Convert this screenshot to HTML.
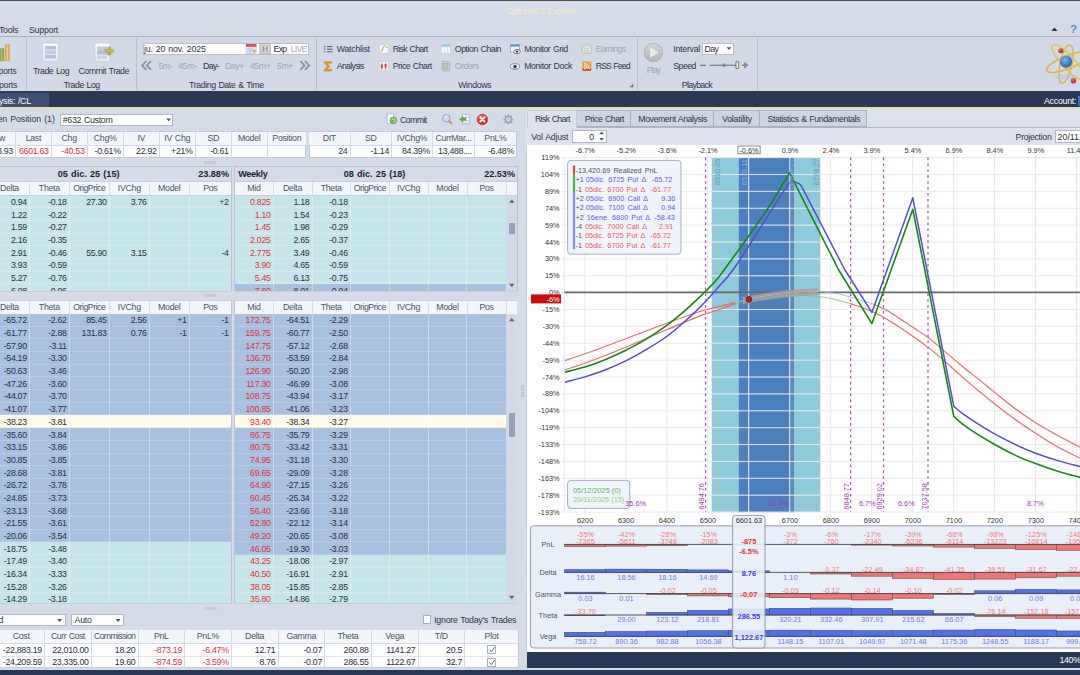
<!DOCTYPE html>
<html lang="es"><head><meta charset="utf-8"><title>OptionNET Explorer</title>
<style>
html,body{margin:0;padding:0;}
body{width:1080px;height:675px;overflow:hidden;position:relative;background:#d6dbe9;font-family:"Liberation Sans",sans-serif;font-size:8.8px;letter-spacing:-0.3px;word-spacing:0.7px;color:#2b3140;}
.r{position:absolute;}
.t{position:absolute;white-space:nowrap;line-height:10px;height:10px;}
svg{position:absolute;left:0;top:0;overflow:visible;}
svg text{font-family:"Liberation Sans",sans-serif;}
</style></head>
<body>
<div class="r" style="left:0.00px;top:0.00px;width:1080.00px;height:675.00px;background:#d6dbe9;"></div>
<div class="r" style="left:0.00px;top:0.00px;width:1080.00px;height:1.00px;background:#4b4f58;"></div>
<div class="t" style="top:5.85px;left:441.40px;width:200px;text-align:center;color:#f1ebcb;letter-spacing:-0.459px;">OptionNET Explorer</div>
<div class="t" style="top:24.95px;left:-1.00px;color:#2f3747;">Tools</div>
<div class="t" style="top:24.95px;left:29.00px;color:#2f3747;letter-spacing:-0.259px;">Support</div>
<div class="r" style="left:0.00px;top:36.00px;width:1080.00px;height:1.00px;background:#aab1c1;"></div>
<div class="r" style="left:0.00px;top:37.00px;width:1080.00px;height:54.00px;background:#d3d9e7;"></div>
<div class="r" style="left:26.00px;top:37.60px;width:1.00px;height:52.60px;background:#bac1d0;"></div>
<div class="r" style="left:136.00px;top:37.60px;width:1.00px;height:52.60px;background:#bac1d0;"></div>
<div class="r" style="left:316.00px;top:37.60px;width:1.00px;height:52.60px;background:#bac1d0;"></div>
<div class="r" style="left:637.00px;top:37.60px;width:1.00px;height:52.60px;background:#bac1d0;"></div>
<div class="r" style="left:757.00px;top:37.60px;width:1.00px;height:52.60px;background:#bac1d0;"></div>
<div class="t" style="top:65.65px;left:-1.60px;color:#2f3747;">ports</div>
<div class="t" style="top:79.75px;left:-1.00px;color:#2f3747;">ports</div>
<div class="t" style="top:65.65px;left:33.00px;color:#2f3747;letter-spacing:-0.487px;">Trade Log</div>
<div class="t" style="top:65.65px;left:78.40px;color:#2f3747;letter-spacing:-0.446px;">Commit Trade</div>
<div class="t" style="top:79.75px;left:63.50px;color:#2f3747;letter-spacing:-0.465px;">Trade Log</div>
<div class="r" style="left:142.50px;top:42.80px;width:166.00px;height:12.00px;background:#ffffff;box-sizing:border-box;border:1px solid #b9c0cf;"></div>
<div class="t" style="top:43.75px;left:143.90px;letter-spacing:-0.141px;">ju. 20 nov. 2025</div>
<div class="t" style="top:43.75px;left:273.60px;letter-spacing:-0.824px;">Exp</div>
<div class="t" style="top:43.75px;left:290.70px;color:#aab0bd;letter-spacing:-0.77px;">LIVE</div>
<div class="t" style="top:60.75px;left:158.50px;color:#9ea6b7;letter-spacing:-0.519px;">5m-</div>
<div class="t" style="top:60.75px;left:178.00px;color:#9ea6b7;letter-spacing:-0.312px;">45m-</div>
<div class="t" style="top:60.75px;left:203.00px;letter-spacing:-0.645px;">Day-</div>
<div class="t" style="top:60.75px;left:225.00px;color:#9ea6b7;letter-spacing:-0.52px;">Day+</div>
<div class="t" style="top:60.75px;left:249.80px;color:#9ea6b7;letter-spacing:-0.362px;">45m+</div>
<div class="t" style="top:60.75px;left:277.00px;color:#9ea6b7;letter-spacing:-0.453px;">5m+</div>
<div class="t" style="top:79.75px;left:189.00px;color:#2f3747;letter-spacing:-0.403px;">Trading Date &amp; Time</div>
<div class="t" style="top:43.75px;left:336.80px;color:#2f3747;letter-spacing:-0.273px;">Watchlist</div>
<div class="t" style="top:43.75px;left:392.70px;color:#2f3747;letter-spacing:-0.687px;">Risk Chart</div>
<div class="t" style="top:43.75px;left:454.80px;color:#2f3747;letter-spacing:-0.487px;">Option Chain</div>
<div class="t" style="top:43.75px;left:524.20px;color:#2f3747;letter-spacing:-0.459px;">Monitor Grid</div>
<div class="t" style="top:43.75px;left:595.70px;color:#9ea6b7;letter-spacing:-0.592px;">Earnings</div>
<div class="t" style="top:61.15px;left:336.80px;color:#2f3747;letter-spacing:-0.733px;">Analysis</div>
<div class="t" style="top:61.15px;left:392.70px;color:#2f3747;letter-spacing:-0.509px;">Price Chart</div>
<div class="t" style="top:61.15px;left:454.80px;color:#9ea6b7;letter-spacing:-0.498px;">Orders</div>
<div class="t" style="top:61.15px;left:524.20px;color:#2f3747;letter-spacing:-0.394px;">Monitor Dock</div>
<div class="t" style="top:61.15px;left:595.70px;color:#2f3747;letter-spacing:-0.9px;">RSS Feed</div>
<div class="t" style="top:79.75px;left:458.20px;color:#2f3747;letter-spacing:-0.398px;">Windows</div>
<div class="t" style="top:64.75px;left:646.80px;color:#9ea6b7;letter-spacing:-1.031px;">Play</div>
<div class="t" style="top:43.75px;left:673.30px;color:#2f3747;letter-spacing:-0.27px;">Interval</div>
<div class="r" style="left:701.70px;top:42.80px;width:32.70px;height:12.40px;background:#ffffff;box-sizing:border-box;border:1px solid #b9c0cf;"></div>
<div class="t" style="top:43.75px;left:704.60px;letter-spacing:-0.652px;">Day</div>
<div class="t" style="top:60.55px;left:673.30px;color:#2f3747;letter-spacing:-0.588px;">Speed</div>
<div class="t" style="top:79.75px;left:681.80px;color:#2f3747;letter-spacing:-0.688px;">Playback</div>
<svg width="1080" height="92" viewBox="0 0 1080 92">
<defs>
<linearGradient id="gdoc" x1="0" y1="0" x2="0" y2="1"><stop offset="0" stop-color="#fbfcfe"/><stop offset="1" stop-color="#e4e9f4"/></linearGradient>
<radialGradient id="gsph" cx="0.4" cy="0.35" r="0.7"><stop offset="0" stop-color="#7fb4e6"/><stop offset="0.6" stop-color="#3f7fc4"/><stop offset="1" stop-color="#2a5f9f"/></radialGradient>
<radialGradient id="gred" cx="0.4" cy="0.35" r="0.7"><stop offset="0" stop-color="#f26a5a"/><stop offset="1" stop-color="#b81e1e"/></radialGradient>
<linearGradient id="gplay" x1="0" y1="0" x2="0" y2="1"><stop offset="0" stop-color="#d2d4d8"/><stop offset="1" stop-color="#b4b6bb"/></linearGradient>
</defs>
<!-- bars icon (clipped) -->
<rect x="-1" y="48.3" width="5.3" height="13" rx="1" fill="#8da451"/>
<rect x="0.8" y="49" width="1.5" height="12" fill="#a9bd6a"/>
<rect x="5" y="44" width="4.8" height="17.3" rx="1" fill="#e2a25a"/>
<rect x="6.6" y="44.6" width="1.6" height="16" fill="#f3c88a"/>
<!-- trade log icon -->
<rect x="42.7" y="42.9" width="15.6" height="18.8" rx="1" fill="url(#gdoc)" stroke="#c3cbe0" stroke-width="0.8"/>
<rect x="45" y="46" width="11" height="3.6" fill="#b7c1de"/>
<rect x="45" y="50.4" width="11" height="3.6" fill="#c3cce4"/>
<rect x="45" y="54.8" width="11" height="3.6" fill="#b7c1de"/>
<!-- commit trade icon -->
<rect x="94.8" y="42.9" width="15.2" height="18.8" rx="1" fill="url(#gdoc)" stroke="#c3cbe0" stroke-width="0.8"/>
<rect x="97" y="46.5" width="10" height="3.8" fill="#c3cce4"/>
<rect x="97" y="51.2" width="10" height="3.4" fill="#b7c1de"/>
<rect x="97" y="55.5" width="10" height="3" fill="#c9d1e6"/>
<rect x="98" y="50.4" width="8" height="1" fill="#8ec07a"/>
<path d="M107.8 47 h2.8 v2.6 h2.8 v2.8 h-2.8 v2.6 h-2.8 v-2.6 h-2.8 v-2.8 h2.8 z" fill="#cdb94e" stroke="#a99a3c" stroke-width="0.5"/>
<path d="M107.8 52.6 h2.8 v2.4 h-2.8 z" fill="#7fb05a"/>
<!-- calendar icon -->
<rect x="246" y="44" width="10.4" height="9.6" rx="1" fill="#e9eef8" stroke="#b4bdd2" stroke-width="0.6"/>
<rect x="246" y="44" width="10.4" height="2.8" fill="#d9534a"/>
<rect x="247.4" y="48" width="5.6" height="4.4" fill="#c7d3ec"/>
<rect x="253.2" y="49.6" width="2.4" height="2.8" fill="#e98b84"/>
<!-- exp toggle button -->
<rect x="259.8" y="43.6" width="10.6" height="10.4" fill="#d2d2d0" stroke="#a9a9a6" stroke-width="0.7"/>
<path d="M263.3 46 v6 M267 46 v6 M263.3 49.6 h1.6 M265.4 48.4 h1.6" stroke="#8d8d8a" stroke-width="0.9" fill="none"/>
<!-- rewind / forward -->
<path d="M146.3 61 l-4.2 4.4 l4.2 4.4 M151 61 l-4.2 4.4 l4.2 4.4" stroke="#8b8f98" stroke-width="1.7" fill="none"/>
<path d="M300.3 61 l4.2 4.4 l-4.2 4.4 M305 61 l4.2 4.4 l-4.2 4.4" stroke="#8b8f98" stroke-width="1.7" fill="none"/>
<!-- watchlist icon -->
<g stroke="#555b66" stroke-width="1"><path d="M327 46.6 h5.6 M327 49.2 h5.6 M327 51.8 h5.6"/></g>
<g fill="#5b8fd6"><rect x="323.8" y="45.8" width="1.6" height="1.6"/><rect x="323.8" y="48.4" width="1.6" height="1.6"/><rect x="323.8" y="51" width="1.6" height="1.6"/></g>
<!-- risk chart icon -->
<rect x="379.2" y="44.3" width="9" height="9" fill="#f6f8fc" stroke="#b9c2d6" stroke-width="0.6"/>
<path d="M380.5 52 c2.5 0 2 -6 4 -6 s1.5 2 3 1.5" stroke="#c58a3c" stroke-width="0.9" fill="none"/>
<!-- option chain icon -->
<rect x="441.4" y="44.6" width="9" height="8.6" fill="#f6f8fc" stroke="#c3cbe0" stroke-width="0.6"/>
<rect x="441.4" y="44.6" width="9" height="2" fill="#8fc4e8"/>
<path d="M444.4 46.6 v6.6 M447.4 46.6 v6.6" stroke="#c3cbe0" stroke-width="0.6"/>
<!-- monitor grid icon -->
<rect x="510.4" y="44.6" width="9" height="7.6" fill="#f6f8fc" stroke="#8da3c6" stroke-width="0.7"/>
<rect x="510.4" y="44.6" width="9" height="2" fill="#5b8fd6"/>
<ellipse cx="517" cy="51.6" rx="3.4" ry="2.2" fill="#e9edf5" stroke="#4a5470" stroke-width="0.7"/>
<circle cx="517" cy="51.6" r="1.2" fill="#39415a"/>
<!-- earnings icon -->
<rect x="582.3" y="44.3" width="9" height="9" rx="1" fill="#e6e8e6" stroke="#b5b8b5" stroke-width="0.7"/>
<rect x="582.3" y="44.3" width="9" height="2.2" fill="#cfd2cf"/>
<path d="M584 48.3 h5.6 M584 50.3 h5.6 M584 52 h5.6" stroke="#c2c5c2" stroke-width="0.8"/>
<!-- analysis sigma -->
<path d="M324 61.6 h7.6 v1.6 h-4.6 l3 3.1 l-3 3.1 h4.8 v1.6 h-7.8 v-1.2 l3.6 -3.5 l-3.6 -3.5 z" fill="#e9952c" stroke="#c7741a" stroke-width="0.4"/>
<!-- price chart icon -->
<rect x="379.2" y="61.6" width="9" height="9.2" fill="#f6f8fc" stroke="#b9c2d6" stroke-width="0.6"/>
<path d="M381.8 62.8 v7 M385.6 62.8 v7" stroke="#c52a2a" stroke-width="0.7"/>
<rect x="380.8" y="64.6" width="2" height="3.6" fill="#d93a3a"/><rect x="384.6" y="64" width="2" height="3.6" fill="#d93a3a"/>
<!-- orders icon -->
<rect x="441.8" y="61.6" width="7.8" height="9.2" rx="0.8" fill="#d0d2d0" stroke="#a5a8a5" stroke-width="0.7"/>
<rect x="443.6" y="63.6" width="4.2" height="5.4" fill="#bfc2bf" stroke="#9da09d" stroke-width="0.5"/>
<!-- monitor dock icon -->
<ellipse cx="515" cy="66.4" rx="4.6" ry="2.9" fill="#f1f3f8" stroke="#6b6f80" stroke-width="0.8"/>
<path d="M510.6 64.6 q4.4 -3 8.8 0" stroke="#e0a464" stroke-width="0.9" fill="none"/>
<circle cx="515" cy="66.6" r="1.8" fill="#39415a"/>
<!-- rss icon -->
<rect x="582.3" y="61.6" width="9" height="9.2" rx="1" fill="#e8a13a"/>
<path d="M582.3 68.4 h9 v1.4 a1 1 0 0 1 -1 1 h-7 a1 1 0 0 1 -1 -1 z" fill="#d8442e"/>
<circle cx="584.7" cy="68.3" r="0.9" fill="#fff"/>
<path d="M584 65.6 a3.4 3.4 0 0 1 3.4 3.4 M584 63.6 a5.4 5.4 0 0 1 5.4 5.4" stroke="#fff" stroke-width="0.9" fill="none"/>
<!-- launcher -->
<path d="M633.4 83.6 v3.6 h-3.6 z" fill="#6f7686"/>
<!-- play -->
<circle cx="653.4" cy="52.5" r="9.2" fill="url(#gplay)" stroke="#a7a9ae" stroke-width="0.8"/>
<path d="M650.6 48 l7.4 4.5 l-7.4 4.5 z" fill="#e7e8ea" stroke="#f6f6f7" stroke-width="0.6"/>
<!-- dropdown arrow -->
<path d="M726.6 47.2 h4.8 l-2.4 2.9 z" fill="#4d5566"/>
<!-- speed slider -->
<path d="M700 65.3 h6" stroke="#6c7383" stroke-width="1.2"/>
<path d="M709.4 65.3 h26.4" stroke="#777d8a" stroke-width="1.2"/>
<path d="M723.9 63.6 v3.4" stroke="#5c6270" stroke-width="1.2"/>
<rect x="735.9" y="61.6" width="2.8" height="7" rx="0.8" fill="#f5e6b3" stroke="#555b66" stroke-width="0.8"/>
<path d="M742.3 65.3 h5.8 M745.2 62.6 v5.4" stroke="#6c7383" stroke-width="1.5"/>
<path d="M744.6 65.3 h1.2" stroke="#d3d9e7" stroke-width="0.8"/>
<!-- collapse triangle + help -->
<path d="M1051.3 30.9 h6.2 l-3.1 -3.4 z" fill="#2a2f3a"/>
<text x="1070" y="33.4" font-size="11.5" font-weight="bold" fill="#4d90d2">?</text>
<!-- atom logo -->
<g fill="none" stroke-linecap="round">
<ellipse cx="1066" cy="64" rx="6" ry="19.5" transform="rotate(12 1066 64)" stroke="#d9b53c" stroke-width="1.3"/>
<ellipse cx="1068" cy="62" rx="6.5" ry="23" transform="rotate(-42 1068 62)" stroke="#e3c24a" stroke-width="1.3"/>
<ellipse cx="1068" cy="62" rx="6.5" ry="23" transform="rotate(68 1068 62)" stroke="#dcb940" stroke-width="1.6"/>
</g>
<ellipse cx="1066" cy="77" rx="12" ry="2.6" fill="#b9bfcc" opacity="0.5"/>
<circle cx="1066" cy="61.6" r="6.2" fill="url(#gsph)"/>
<circle cx="1060.8" cy="50.7" r="2.5" fill="url(#gred)"/>
<circle cx="1073.5" cy="80.7" r="2.7" fill="url(#gred)"/>
</svg>
<div class="r" style="left:0.00px;top:91.00px;width:1080.00px;height:16.40px;background:#293955;"></div>
<div class="r" style="left:0.00px;top:93.00px;width:49.00px;height:14.40px;background:#3c5174;border-radius:1px 1px 0 0;"></div>
<div class="t" style="top:95.75px;left:-1.00px;color:#ffffff;">ysis: /CL</div>
<div class="t" style="top:95.75px;left:1044.00px;color:#ffffff;letter-spacing:-0.254px;">Account:</div>
<div class="r" style="left:1078.40px;top:96.40px;width:4.00px;height:9.60px;background:#3f6fc2;"></div>
<div class="r" style="left:0.00px;top:107.30px;width:1080.00px;height:1.30px;background:#e6df9c;"></div>
<div class="t" style="top:114.45px;left:-2.60px;color:#2f3747;letter-spacing:-0.05px;">en Position (1)</div>
<div class="r" style="left:60.30px;top:113.60px;width:112.80px;height:12.00px;background:#ffffff;box-sizing:border-box;border:1px solid #b0b7c6;"></div>
<div class="t" style="top:114.95px;left:62.70px;letter-spacing:-0.294px;">#632 Custom</div>
<svg width="540" height="140"><path d="M166.2 118.4 h4.8 l-2.4 2.9 z" fill="#4d5566"/></svg>
<div class="t" style="top:114.55px;left:400.10px;color:#2f3747;letter-spacing:-0.619px;">Commit</div>
<svg width="540" height="140" viewBox="0 0 540 140">
<defs><radialGradient id="gx" cx="0.4" cy="0.3" r="0.8"><stop offset="0" stop-color="#f06a5e"/><stop offset="1" stop-color="#c4161c"/></radialGradient></defs>
<rect x="387.2" y="113.8" width="6.4" height="9.6" fill="#f4f7fc" stroke="#a9b6d2" stroke-width="0.7"/>
<circle cx="393.4" cy="120.4" r="3.3" fill="#6bb04a" stroke="#4d8a36" stroke-width="0.5"/>
<path d="M391.6 120.4 a1.8 1.8 0 1 1 1.8 1.8" stroke="#eaf6e2" stroke-width="0.9" fill="none"/>
<path d="M451.6 123.6 l-3 -3" stroke="#d98a3a" stroke-width="1.8" stroke-linecap="round"/>
<circle cx="446.4" cy="118.3" r="3.7" fill="#c4e2f6" stroke="#8f9db8" stroke-width="0.9"/>
<path d="M444.4 117.4 a2.4 2.4 0 0 1 2.6 -1.6" stroke="#ffffff" stroke-width="0.8" fill="none"/>
<rect x="462.4" y="114.4" width="7.2" height="9.4" fill="#f7f9fd" stroke="#9fb0cf" stroke-width="0.7"/>
<path d="M462.4 117.5 h7.2 M462.4 120.6 h7.2 M466 114.4 v9.4" stroke="#9fb0cf" stroke-width="0.6"/>
<path d="M459.6 119.2 l3.4 -2.8 v1.7 h2.6 v2.2 h-2.6 v1.7 z" fill="#6faa3e" stroke="#4f8428" stroke-width="0.4"/>
<circle cx="482.4" cy="119.4" r="5.3" fill="url(#gx)" stroke="#b01818" stroke-width="0.5"/>
<path d="M480.2 117.2 l4.4 4.4 M484.6 117.2 l-4.4 4.4" stroke="#ffffff" stroke-width="1.7" stroke-linecap="round"/>
<g transform="translate(508.3 119.4)" fill="#9aa5bf">
<circle r="3.6"/>
<g><rect x="-1" y="-4.9" width="2" height="9.8" rx="0.5"/><rect x="-1" y="-4.9" width="2" height="9.8" rx="0.5" transform="rotate(45)"/><rect x="-1" y="-4.9" width="2" height="9.8" rx="0.5" transform="rotate(90)"/><rect x="-1" y="-4.9" width="2" height="9.8" rx="0.5" transform="rotate(135)"/></g>
<circle r="2.1" fill="#e2e7f1"/><circle r="1" fill="#aeb8cf"/>
</g>
</svg>
<div class="r" style="left:-20.50px;top:131.40px;width:326.90px;height:26.20px;background:#ffffff;box-sizing:border-box;border:1px solid #c3cad8;"></div>
<div class="r" style="left:-20.00px;top:131.90px;width:325.90px;height:13.10px;background:#f2f5fa;"></div>
<div class="r" style="left:-20.00px;top:145.00px;width:325.90px;height:0.80px;background:#d5dbe6;"></div>
<div class="r" style="left:15.20px;top:131.90px;width:0.80px;height:25.60px;background:#d5dbe6;"></div>
<div class="r" style="left:51.00px;top:131.90px;width:0.80px;height:25.60px;background:#d5dbe6;"></div>
<div class="r" style="left:86.80px;top:131.90px;width:0.80px;height:25.60px;background:#d5dbe6;"></div>
<div class="r" style="left:123.00px;top:131.90px;width:0.80px;height:25.60px;background:#d5dbe6;"></div>
<div class="r" style="left:158.90px;top:131.90px;width:0.80px;height:25.60px;background:#d5dbe6;"></div>
<div class="r" style="left:194.90px;top:131.90px;width:0.80px;height:25.60px;background:#d5dbe6;"></div>
<div class="r" style="left:231.00px;top:131.90px;width:0.80px;height:25.60px;background:#d5dbe6;"></div>
<div class="r" style="left:266.90px;top:131.90px;width:0.80px;height:25.60px;background:#d5dbe6;"></div>
<div class="t" style="top:132.75px;left:-20.50px;width:36.0px;text-align:center;color:#4b5569;">Low</div>
<div class="t" style="top:132.75px;left:15.50px;width:35.8px;text-align:center;color:#4b5569;">Last</div>
<div class="t" style="top:132.75px;left:51.30px;width:35.8px;text-align:center;color:#4b5569;">Chg</div>
<div class="t" style="top:132.75px;left:87.10px;width:36.2px;text-align:center;color:#4b5569;">Chg%</div>
<div class="t" style="top:132.75px;left:123.30px;width:35.89999999999999px;text-align:center;color:#4b5569;">IV</div>
<div class="t" style="top:132.75px;left:159.20px;width:36.0px;text-align:center;color:#4b5569;">IV Chg</div>
<div class="t" style="top:132.75px;left:195.20px;width:36.10000000000002px;text-align:center;color:#4b5569;">SD</div>
<div class="t" style="top:132.75px;left:231.30px;width:35.89999999999998px;text-align:center;color:#4b5569;">Model</div>
<div class="t" style="top:132.75px;left:267.20px;width:39.19999999999999px;text-align:center;color:#4b5569;">Position</div>
<div class="t" style="top:146.45px;left:-20.10px;width:33.0px;text-align:right;">6528.93</div>
<div class="t" style="top:146.45px;left:15.90px;width:32.8px;text-align:right;color:#e0313f;">6601.63</div>
<div class="t" style="top:146.45px;left:51.70px;width:32.8px;text-align:right;color:#e0313f;">-40.53</div>
<div class="t" style="top:146.45px;left:87.50px;width:33.2px;text-align:right;">-0.61%</div>
<div class="t" style="top:146.45px;left:123.70px;width:32.89999999999999px;text-align:right;">22.92</div>
<div class="t" style="top:146.45px;left:159.60px;width:33.0px;text-align:right;">+21%</div>
<div class="t" style="top:146.45px;left:195.60px;width:33.10000000000002px;text-align:right;">-0.61</div>
<div class="r" style="left:308.60px;top:131.40px;width:208.00px;height:26.20px;background:#ffffff;box-sizing:border-box;border:1px solid #c3cad8;"></div>
<div class="r" style="left:309.10px;top:131.90px;width:207.00px;height:13.10px;background:#f2f5fa;"></div>
<div class="r" style="left:309.10px;top:145.00px;width:207.00px;height:0.80px;background:#d5dbe6;"></div>
<div class="r" style="left:349.70px;top:131.90px;width:0.80px;height:25.60px;background:#d5dbe6;"></div>
<div class="r" style="left:391.30px;top:131.90px;width:0.80px;height:25.60px;background:#d5dbe6;"></div>
<div class="r" style="left:432.30px;top:131.90px;width:0.80px;height:25.60px;background:#d5dbe6;"></div>
<div class="r" style="left:474.10px;top:131.90px;width:0.80px;height:25.60px;background:#d5dbe6;"></div>
<div class="t" style="top:132.75px;left:308.60px;width:41.39999999999998px;text-align:center;color:#4b5569;">DIT</div>
<div class="t" style="top:132.75px;left:350.00px;width:41.60000000000002px;text-align:center;color:#4b5569;">SD</div>
<div class="t" style="top:132.75px;left:391.60px;width:41.0px;text-align:center;color:#4b5569;">IVChg%</div>
<div class="t" style="top:132.75px;left:432.60px;width:41.799999999999955px;text-align:center;color:#4b5569;">CurrMar...</div>
<div class="t" style="top:132.75px;left:474.40px;width:42.200000000000045px;text-align:center;color:#4b5569;">PnL%</div>
<div class="t" style="top:146.45px;left:309.00px;width:38.39999999999998px;text-align:right;">24</div>
<div class="t" style="top:146.45px;left:350.40px;width:38.60000000000002px;text-align:right;">-1.14</div>
<div class="t" style="top:146.45px;left:392.00px;width:38.0px;text-align:right;">84.39%</div>
<div class="t" style="top:146.45px;left:433.00px;width:38.799999999999955px;text-align:right;">13,488....</div>
<div class="t" style="top:146.45px;left:474.80px;width:39.200000000000045px;text-align:right;">-6.48%</div>
<div class="t" style="left:200.5px;top:156.7px;width:20px;text-align:center;color:#aab2c3;font-size:6.2px;letter-spacing:0;">xxxx</div>
<div class="t" style="left:200.5px;top:290.2px;width:20px;text-align:center;color:#aab2c3;font-size:6.2px;letter-spacing:0;">xxxx</div>
<div class="t" style="left:200.5px;top:602.7px;width:20px;text-align:center;color:#aab2c3;font-size:6.2px;letter-spacing:0;">xxxx</div>
<div class="t" style="left:518.3px;top:384.5px;width:10px;text-align:center;color:#aab2c3;font-size:6.2px;letter-spacing:0;transform:rotate(90deg);">xxxx</div>
<div class="r" style="left:-10.00px;top:166.20px;width:241.80px;height:0.80px;background:#bcc4d4;"></div>
<div class="r" style="left:234.40px;top:166.20px;width:282.80px;height:0.80px;background:#bcc4d4;"></div>
<div class="r" style="left:231.30px;top:166.20px;width:0.80px;height:125.00px;background:#bcc4d4;"></div>
<div class="r" style="left:234.40px;top:166.20px;width:0.80px;height:125.00px;background:#bcc4d4;"></div>
<div class="r" style="left:516.60px;top:166.20px;width:0.80px;height:125.00px;background:#bcc4d4;"></div>
<div class="r" style="left:231.30px;top:300.00px;width:0.80px;height:303.60px;background:#bcc4d4;"></div>
<div class="r" style="left:234.40px;top:300.00px;width:0.80px;height:303.60px;background:#bcc4d4;"></div>
<div class="t" style="top:169.25px;left:-11.40px;width:200px;text-align:center;color:#1d2230;font-size:9.1px;letter-spacing:0px;font-weight:bold;">05 dic. 25 (15)</div>
<div class="t" style="top:169.25px;left:169.00px;width:60px;text-align:right;color:#1d2230;font-size:9.1px;letter-spacing:0px;font-weight:bold;">23.88%</div>
<div class="t" style="top:169.25px;left:238.20px;color:#1d2230;font-size:9.1px;font-weight:bold;">Weekly</div>
<div class="t" style="top:169.25px;left:274.50px;width:200px;text-align:center;color:#1d2230;font-size:9.1px;letter-spacing:0px;font-weight:bold;">08 dic. 25 (18)</div>
<div class="t" style="top:169.25px;left:455.00px;width:60px;text-align:right;color:#1d2230;font-size:9.1px;letter-spacing:0px;font-weight:bold;">22.53%</div>
<div class="r" style="left:-10.50px;top:181.40px;width:241.80px;height:110.40px;background:#c9d0dd;"></div>
<div class="r" style="left:-9.90px;top:182.00px;width:240.60px;height:13.20px;background:#f2f5fa;"></div>
<div class="r" style="left:29.10px;top:182.00px;width:0.80px;height:13.20px;background:#d9dee8;"></div>
<div class="r" style="left:69.00px;top:182.00px;width:0.80px;height:13.20px;background:#d9dee8;"></div>
<div class="r" style="left:109.00px;top:182.00px;width:0.80px;height:13.20px;background:#d9dee8;"></div>
<div class="r" style="left:149.00px;top:182.00px;width:0.80px;height:13.20px;background:#d9dee8;"></div>
<div class="r" style="left:189.00px;top:182.00px;width:0.80px;height:13.20px;background:#d9dee8;"></div>
<div class="t" style="top:182.95px;left:-10.50px;width:39.9px;text-align:center;color:#4b5569;">Delta</div>
<div class="t" style="top:182.95px;left:29.40px;width:39.9px;text-align:center;color:#4b5569;">Theta</div>
<div class="t" style="top:182.95px;left:69.30px;width:40.0px;text-align:center;color:#4b5569;letter-spacing:-0.486px;">OrigPrice</div>
<div class="t" style="top:182.95px;left:109.30px;width:40.000000000000014px;text-align:center;color:#4b5569;">IVChg</div>
<div class="t" style="top:182.95px;left:149.30px;width:40.0px;text-align:center;color:#4b5569;">Model</div>
<div class="t" style="top:182.95px;left:189.30px;width:42.0px;text-align:center;color:#4b5569;">Pos</div>
<div class="r" style="left:-9.90px;top:195.60px;width:240.60px;height:95.60px;overflow:hidden;">
<div class="r" style="left:0;top:0.00px;width:240.60px;height:12.68px;background:#c7e6ea;box-shadow:inset 0 -0.8px 0 #dbe8ef;"></div>
<div class="r" style="left:0;top:12.68px;width:240.60px;height:12.68px;background:#c7e6ea;box-shadow:inset 0 -0.8px 0 #dbe8ef;"></div>
<div class="r" style="left:0;top:25.35px;width:240.60px;height:12.68px;background:#c7e6ea;box-shadow:inset 0 -0.8px 0 #dbe8ef;"></div>
<div class="r" style="left:0;top:38.03px;width:240.60px;height:12.68px;background:#c7e6ea;box-shadow:inset 0 -0.8px 0 #dbe8ef;"></div>
<div class="r" style="left:0;top:50.70px;width:240.60px;height:12.68px;background:#c7e6ea;box-shadow:inset 0 -0.8px 0 #dbe8ef;"></div>
<div class="r" style="left:0;top:63.38px;width:240.60px;height:12.68px;background:#c7e6ea;box-shadow:inset 0 -0.8px 0 #dbe8ef;"></div>
<div class="r" style="left:0;top:76.05px;width:240.60px;height:12.68px;background:#c7e6ea;box-shadow:inset 0 -0.8px 0 #dbe8ef;"></div>
<div class="r" style="left:0;top:88.73px;width:240.60px;height:12.68px;background:#c7e6ea;box-shadow:inset 0 -0.8px 0 #dbe8ef;"></div>
<div class="r" style="left:39.00px;top:0;width:0.8px;height:95.60px;background:rgba(255,255,255,0.36);"></div>
<div class="r" style="left:78.90px;top:0;width:0.8px;height:95.60px;background:rgba(255,255,255,0.36);"></div>
<div class="r" style="left:118.90px;top:0;width:0.8px;height:95.60px;background:rgba(255,255,255,0.36);"></div>
<div class="r" style="left:158.90px;top:0;width:0.8px;height:95.60px;background:rgba(255,255,255,0.36);"></div>
<div class="r" style="left:198.90px;top:0;width:0.8px;height:95.60px;background:rgba(255,255,255,0.36);"></div>
<div class="t" style="left:-0.60px;width:37.30px;text-align:right;top:1.35px;">0.94</div>
<div class="t" style="left:39.30px;width:37.30px;text-align:right;top:1.35px;">-0.18</div>
<div class="t" style="left:79.20px;width:37.40px;text-align:right;top:1.35px;">27.30</div>
<div class="t" style="left:119.20px;width:37.40px;text-align:right;top:1.35px;">3.76</div>
<div class="t" style="left:199.20px;width:39.40px;text-align:right;top:1.35px;">+2</div>
<div class="t" style="left:-0.60px;width:37.30px;text-align:right;top:14.03px;">1.22</div>
<div class="t" style="left:39.30px;width:37.30px;text-align:right;top:14.03px;">-0.22</div>
<div class="t" style="left:-0.60px;width:37.30px;text-align:right;top:26.70px;">1.59</div>
<div class="t" style="left:39.30px;width:37.30px;text-align:right;top:26.70px;">-0.27</div>
<div class="t" style="left:-0.60px;width:37.30px;text-align:right;top:39.38px;">2.16</div>
<div class="t" style="left:39.30px;width:37.30px;text-align:right;top:39.38px;">-0.35</div>
<div class="t" style="left:-0.60px;width:37.30px;text-align:right;top:52.05px;">2.91</div>
<div class="t" style="left:39.30px;width:37.30px;text-align:right;top:52.05px;">-0.46</div>
<div class="t" style="left:79.20px;width:37.40px;text-align:right;top:52.05px;">55.90</div>
<div class="t" style="left:119.20px;width:37.40px;text-align:right;top:52.05px;">3.15</div>
<div class="t" style="left:199.20px;width:39.40px;text-align:right;top:52.05px;">-4</div>
<div class="t" style="left:-0.60px;width:37.30px;text-align:right;top:64.73px;">3.93</div>
<div class="t" style="left:39.30px;width:37.30px;text-align:right;top:64.73px;">-0.59</div>
<div class="t" style="left:-0.60px;width:37.30px;text-align:right;top:77.40px;">5.27</div>
<div class="t" style="left:39.30px;width:37.30px;text-align:right;top:77.40px;">-0.76</div>
<div class="t" style="left:-0.60px;width:37.30px;text-align:right;top:90.08px;">6.98</div>
<div class="t" style="left:39.30px;width:37.30px;text-align:right;top:90.08px;">-0.96</div>
</div>
<div class="r" style="left:234.60px;top:181.40px;width:282.60px;height:110.40px;background:#c9d0dd;"></div>
<div class="r" style="left:235.20px;top:182.00px;width:281.40px;height:13.20px;background:#f2f5fa;"></div>
<div class="r" style="left:272.90px;top:182.00px;width:0.80px;height:13.20px;background:#d9dee8;"></div>
<div class="r" style="left:311.70px;top:182.00px;width:0.80px;height:13.20px;background:#d9dee8;"></div>
<div class="r" style="left:350.10px;top:182.00px;width:0.80px;height:13.20px;background:#d9dee8;"></div>
<div class="r" style="left:388.90px;top:182.00px;width:0.80px;height:13.20px;background:#d9dee8;"></div>
<div class="r" style="left:427.70px;top:182.00px;width:0.80px;height:13.20px;background:#d9dee8;"></div>
<div class="r" style="left:466.50px;top:182.00px;width:0.80px;height:13.20px;background:#d9dee8;"></div>
<div class="r" style="left:506.10px;top:182.00px;width:0.80px;height:13.20px;background:#d9dee8;"></div>
<div class="t" style="top:182.95px;left:234.60px;width:38.599999999999994px;text-align:center;color:#4b5569;">Mid</div>
<div class="t" style="top:182.95px;left:273.20px;width:38.80000000000001px;text-align:center;color:#4b5569;">Delta</div>
<div class="t" style="top:182.95px;left:312.00px;width:38.39999999999998px;text-align:center;color:#4b5569;">Theta</div>
<div class="t" style="top:182.95px;left:350.40px;width:38.80000000000001px;text-align:center;color:#4b5569;letter-spacing:-0.486px;">OrigPrice</div>
<div class="t" style="top:182.95px;left:389.20px;width:38.80000000000001px;text-align:center;color:#4b5569;">IVChg</div>
<div class="t" style="top:182.95px;left:428.00px;width:38.80000000000001px;text-align:center;color:#4b5569;">Model</div>
<div class="t" style="top:182.95px;left:466.80px;width:39.599999999999966px;text-align:center;color:#4b5569;">Pos</div>
<div class="r" style="left:235.20px;top:195.60px;width:281.40px;height:95.60px;overflow:hidden;">
<div class="r" style="left:0;top:0.00px;width:271.20px;height:12.68px;background:#c7e6ea;box-shadow:inset 0 -0.8px 0 #dbe8ef;"></div>
<div class="r" style="left:0;top:12.68px;width:271.20px;height:12.68px;background:#c7e6ea;box-shadow:inset 0 -0.8px 0 #dbe8ef;"></div>
<div class="r" style="left:0;top:25.35px;width:271.20px;height:12.68px;background:#c7e6ea;box-shadow:inset 0 -0.8px 0 #dbe8ef;"></div>
<div class="r" style="left:0;top:38.03px;width:271.20px;height:12.68px;background:#c7e6ea;box-shadow:inset 0 -0.8px 0 #dbe8ef;"></div>
<div class="r" style="left:0;top:50.70px;width:271.20px;height:12.68px;background:#c7e6ea;box-shadow:inset 0 -0.8px 0 #dbe8ef;"></div>
<div class="r" style="left:0;top:63.38px;width:271.20px;height:12.68px;background:#c7e6ea;box-shadow:inset 0 -0.8px 0 #dbe8ef;"></div>
<div class="r" style="left:0;top:76.05px;width:271.20px;height:12.68px;background:#c7e6ea;box-shadow:inset 0 -0.8px 0 #dbe8ef;"></div>
<div class="r" style="left:0;top:88.73px;width:271.20px;height:12.68px;background:#a9c1e0;box-shadow:inset 0 -0.8px 0 #bccde6;"></div>
<div class="r" style="left:37.70px;top:0;width:0.8px;height:95.60px;background:rgba(255,255,255,0.36);"></div>
<div class="r" style="left:76.50px;top:0;width:0.8px;height:95.60px;background:rgba(255,255,255,0.36);"></div>
<div class="r" style="left:114.90px;top:0;width:0.8px;height:95.60px;background:rgba(255,255,255,0.36);"></div>
<div class="r" style="left:153.70px;top:0;width:0.8px;height:95.60px;background:rgba(255,255,255,0.36);"></div>
<div class="r" style="left:192.50px;top:0;width:0.8px;height:95.60px;background:rgba(255,255,255,0.36);"></div>
<div class="r" style="left:231.30px;top:0;width:0.8px;height:95.60px;background:rgba(255,255,255,0.36);"></div>
<div class="t" style="left:-0.60px;width:36.00px;text-align:right;top:1.35px;color:#e0313f;">0.825</div>
<div class="t" style="left:38.00px;width:36.20px;text-align:right;top:1.35px;">1.18</div>
<div class="t" style="left:76.80px;width:35.80px;text-align:right;top:1.35px;">-0.18</div>
<div class="t" style="left:-0.60px;width:36.00px;text-align:right;top:14.03px;color:#e0313f;">1.10</div>
<div class="t" style="left:38.00px;width:36.20px;text-align:right;top:14.03px;">1.54</div>
<div class="t" style="left:76.80px;width:35.80px;text-align:right;top:14.03px;">-0.23</div>
<div class="t" style="left:-0.60px;width:36.00px;text-align:right;top:26.70px;color:#e0313f;">1.45</div>
<div class="t" style="left:38.00px;width:36.20px;text-align:right;top:26.70px;">1.98</div>
<div class="t" style="left:76.80px;width:35.80px;text-align:right;top:26.70px;">-0.29</div>
<div class="t" style="left:-0.60px;width:36.00px;text-align:right;top:39.38px;color:#e0313f;">2.025</div>
<div class="t" style="left:38.00px;width:36.20px;text-align:right;top:39.38px;">2.65</div>
<div class="t" style="left:76.80px;width:35.80px;text-align:right;top:39.38px;">-0.37</div>
<div class="t" style="left:-0.60px;width:36.00px;text-align:right;top:52.05px;color:#e0313f;">2.775</div>
<div class="t" style="left:38.00px;width:36.20px;text-align:right;top:52.05px;">3.49</div>
<div class="t" style="left:76.80px;width:35.80px;text-align:right;top:52.05px;">-0.46</div>
<div class="t" style="left:-0.60px;width:36.00px;text-align:right;top:64.73px;color:#e0313f;">3.90</div>
<div class="t" style="left:38.00px;width:36.20px;text-align:right;top:64.73px;">4.65</div>
<div class="t" style="left:76.80px;width:35.80px;text-align:right;top:64.73px;">-0.59</div>
<div class="t" style="left:-0.60px;width:36.00px;text-align:right;top:77.40px;color:#e0313f;">5.45</div>
<div class="t" style="left:38.00px;width:36.20px;text-align:right;top:77.40px;">6.13</div>
<div class="t" style="left:76.80px;width:35.80px;text-align:right;top:77.40px;">-0.75</div>
<div class="t" style="left:-0.60px;width:36.00px;text-align:right;top:90.08px;color:#e0313f;">7.60</div>
<div class="t" style="left:38.00px;width:36.20px;text-align:right;top:90.08px;">8.01</div>
<div class="t" style="left:76.80px;width:35.80px;text-align:right;top:90.08px;">-0.94</div>
</div>
<div class="r" style="left:506.40px;top:195.60px;width:10.20px;height:95.60px;background:#d3d9e7;"></div>
<div class="r" style="left:508.70px;top:222.80px;width:6.20px;height:11.60px;background:#97a1b8;border-radius:0.5px;"></div>
<svg width="540" height="675"><path d="M509.0 202.79999999999998 h5.6 l-2.8 -3.4 z M509.0 283.8 h5.6 l-2.8 3.4 z" fill="#5d6577"/></svg>
<div class="r" style="left:-10.50px;top:300.00px;width:241.80px;height:303.80px;background:#c9d0dd;"></div>
<div class="r" style="left:-9.90px;top:300.60px;width:240.60px;height:13.10px;background:#f2f5fa;"></div>
<div class="r" style="left:29.10px;top:300.60px;width:0.80px;height:13.10px;background:#d9dee8;"></div>
<div class="r" style="left:69.00px;top:300.60px;width:0.80px;height:13.10px;background:#d9dee8;"></div>
<div class="r" style="left:109.00px;top:300.60px;width:0.80px;height:13.10px;background:#d9dee8;"></div>
<div class="r" style="left:149.00px;top:300.60px;width:0.80px;height:13.10px;background:#d9dee8;"></div>
<div class="r" style="left:189.00px;top:300.60px;width:0.80px;height:13.10px;background:#d9dee8;"></div>
<div class="t" style="top:301.55px;left:-10.50px;width:39.9px;text-align:center;color:#4b5569;">Delta</div>
<div class="t" style="top:301.55px;left:29.40px;width:39.9px;text-align:center;color:#4b5569;">Theta</div>
<div class="t" style="top:301.55px;left:69.30px;width:40.0px;text-align:center;color:#4b5569;letter-spacing:-0.486px;">OrigPrice</div>
<div class="t" style="top:301.55px;left:109.30px;width:40.000000000000014px;text-align:center;color:#4b5569;">IVChg</div>
<div class="t" style="top:301.55px;left:149.30px;width:40.0px;text-align:center;color:#4b5569;">Model</div>
<div class="t" style="top:301.55px;left:189.30px;width:42.0px;text-align:center;color:#4b5569;">Pos</div>
<div class="r" style="left:-9.90px;top:314.10px;width:240.60px;height:289.10px;overflow:hidden;">
<div class="r" style="left:0;top:0.00px;width:240.60px;height:12.68px;background:#a9c1e0;box-shadow:inset 0 -0.8px 0 #bccde6;"></div>
<div class="r" style="left:0;top:12.68px;width:240.60px;height:12.68px;background:#a9c1e0;box-shadow:inset 0 -0.8px 0 #bccde6;"></div>
<div class="r" style="left:0;top:25.35px;width:240.60px;height:12.68px;background:#a9c1e0;box-shadow:inset 0 -0.8px 0 #bccde6;"></div>
<div class="r" style="left:0;top:38.03px;width:240.60px;height:12.68px;background:#a9c1e0;box-shadow:inset 0 -0.8px 0 #bccde6;"></div>
<div class="r" style="left:0;top:50.70px;width:240.60px;height:12.68px;background:#a9c1e0;box-shadow:inset 0 -0.8px 0 #bccde6;"></div>
<div class="r" style="left:0;top:63.38px;width:240.60px;height:12.68px;background:#a9c1e0;box-shadow:inset 0 -0.8px 0 #bccde6;"></div>
<div class="r" style="left:0;top:76.05px;width:240.60px;height:12.68px;background:#a9c1e0;box-shadow:inset 0 -0.8px 0 #bccde6;"></div>
<div class="r" style="left:0;top:88.73px;width:240.60px;height:12.68px;background:#a9c1e0;box-shadow:inset 0 -0.8px 0 #bccde6;"></div>
<div class="r" style="left:0;top:101.40px;width:240.60px;height:12.68px;background:#fffbea;box-shadow:inset 0 -0.8px 0 #e9e6da;"></div>
<div class="r" style="left:0;top:114.08px;width:240.60px;height:12.68px;background:#a9c1e0;box-shadow:inset 0 -0.8px 0 #bccde6;"></div>
<div class="r" style="left:0;top:126.75px;width:240.60px;height:12.68px;background:#a9c1e0;box-shadow:inset 0 -0.8px 0 #bccde6;"></div>
<div class="r" style="left:0;top:139.43px;width:240.60px;height:12.68px;background:#a9c1e0;box-shadow:inset 0 -0.8px 0 #bccde6;"></div>
<div class="r" style="left:0;top:152.10px;width:240.60px;height:12.68px;background:#a9c1e0;box-shadow:inset 0 -0.8px 0 #bccde6;"></div>
<div class="r" style="left:0;top:164.78px;width:240.60px;height:12.68px;background:#a9c1e0;box-shadow:inset 0 -0.8px 0 #bccde6;"></div>
<div class="r" style="left:0;top:177.45px;width:240.60px;height:12.68px;background:#a9c1e0;box-shadow:inset 0 -0.8px 0 #bccde6;"></div>
<div class="r" style="left:0;top:190.12px;width:240.60px;height:12.68px;background:#a9c1e0;box-shadow:inset 0 -0.8px 0 #bccde6;"></div>
<div class="r" style="left:0;top:202.80px;width:240.60px;height:12.68px;background:#a9c1e0;box-shadow:inset 0 -0.8px 0 #bccde6;"></div>
<div class="r" style="left:0;top:215.48px;width:240.60px;height:12.68px;background:#a9c1e0;box-shadow:inset 0 -0.8px 0 #bccde6;"></div>
<div class="r" style="left:0;top:228.15px;width:240.60px;height:12.68px;background:#c7e6ea;box-shadow:inset 0 -0.8px 0 #dbe8ef;"></div>
<div class="r" style="left:0;top:240.83px;width:240.60px;height:12.68px;background:#c7e6ea;box-shadow:inset 0 -0.8px 0 #dbe8ef;"></div>
<div class="r" style="left:0;top:253.50px;width:240.60px;height:12.68px;background:#c7e6ea;box-shadow:inset 0 -0.8px 0 #dbe8ef;"></div>
<div class="r" style="left:0;top:266.18px;width:240.60px;height:12.68px;background:#c7e6ea;box-shadow:inset 0 -0.8px 0 #dbe8ef;"></div>
<div class="r" style="left:0;top:278.85px;width:240.60px;height:12.68px;background:#c7e6ea;box-shadow:inset 0 -0.8px 0 #dbe8ef;"></div>
<div class="r" style="left:39.00px;top:0;width:0.8px;height:289.10px;background:rgba(255,255,255,0.36);"></div>
<div class="r" style="left:78.90px;top:0;width:0.8px;height:289.10px;background:rgba(255,255,255,0.36);"></div>
<div class="r" style="left:118.90px;top:0;width:0.8px;height:289.10px;background:rgba(255,255,255,0.36);"></div>
<div class="r" style="left:158.90px;top:0;width:0.8px;height:289.10px;background:rgba(255,255,255,0.36);"></div>
<div class="r" style="left:198.90px;top:0;width:0.8px;height:289.10px;background:rgba(255,255,255,0.36);"></div>
<div class="t" style="left:-0.60px;width:37.30px;text-align:right;top:1.35px;">-65.72</div>
<div class="t" style="left:39.30px;width:37.30px;text-align:right;top:1.35px;">-2.62</div>
<div class="t" style="left:79.20px;width:37.40px;text-align:right;top:1.35px;">85.45</div>
<div class="t" style="left:119.20px;width:37.40px;text-align:right;top:1.35px;">2.56</div>
<div class="t" style="left:159.20px;width:37.40px;text-align:right;top:1.35px;">+1</div>
<div class="t" style="left:199.20px;width:39.40px;text-align:right;top:1.35px;">-1</div>
<div class="t" style="left:-0.60px;width:37.30px;text-align:right;top:14.03px;">-61.77</div>
<div class="t" style="left:39.30px;width:37.30px;text-align:right;top:14.03px;">-2.88</div>
<div class="t" style="left:79.20px;width:37.40px;text-align:right;top:14.03px;">131.83</div>
<div class="t" style="left:119.20px;width:37.40px;text-align:right;top:14.03px;">0.76</div>
<div class="t" style="left:159.20px;width:37.40px;text-align:right;top:14.03px;">-1</div>
<div class="t" style="left:199.20px;width:39.40px;text-align:right;top:14.03px;">-1</div>
<div class="t" style="left:-0.60px;width:37.30px;text-align:right;top:26.70px;">-57.90</div>
<div class="t" style="left:39.30px;width:37.30px;text-align:right;top:26.70px;">-3.11</div>
<div class="t" style="left:-0.60px;width:37.30px;text-align:right;top:39.38px;">-54.19</div>
<div class="t" style="left:39.30px;width:37.30px;text-align:right;top:39.38px;">-3.30</div>
<div class="t" style="left:-0.60px;width:37.30px;text-align:right;top:52.05px;">-50.63</div>
<div class="t" style="left:39.30px;width:37.30px;text-align:right;top:52.05px;">-3.46</div>
<div class="t" style="left:-0.60px;width:37.30px;text-align:right;top:64.73px;">-47.26</div>
<div class="t" style="left:39.30px;width:37.30px;text-align:right;top:64.73px;">-3.60</div>
<div class="t" style="left:-0.60px;width:37.30px;text-align:right;top:77.40px;">-44.07</div>
<div class="t" style="left:39.30px;width:37.30px;text-align:right;top:77.40px;">-3.70</div>
<div class="t" style="left:-0.60px;width:37.30px;text-align:right;top:90.08px;">-41.07</div>
<div class="t" style="left:39.30px;width:37.30px;text-align:right;top:90.08px;">-3.77</div>
<div class="t" style="left:-0.60px;width:37.30px;text-align:right;top:102.75px;">-38.23</div>
<div class="t" style="left:39.30px;width:37.30px;text-align:right;top:102.75px;">-3.81</div>
<div class="t" style="left:-0.60px;width:37.30px;text-align:right;top:115.43px;">-35.60</div>
<div class="t" style="left:39.30px;width:37.30px;text-align:right;top:115.43px;">-3.84</div>
<div class="t" style="left:-0.60px;width:37.30px;text-align:right;top:128.10px;">-33.15</div>
<div class="t" style="left:39.30px;width:37.30px;text-align:right;top:128.10px;">-3.86</div>
<div class="t" style="left:-0.60px;width:37.30px;text-align:right;top:140.78px;">-30.85</div>
<div class="t" style="left:39.30px;width:37.30px;text-align:right;top:140.78px;">-3.85</div>
<div class="t" style="left:-0.60px;width:37.30px;text-align:right;top:153.45px;">-28.68</div>
<div class="t" style="left:39.30px;width:37.30px;text-align:right;top:153.45px;">-3.81</div>
<div class="t" style="left:-0.60px;width:37.30px;text-align:right;top:166.13px;">-26.72</div>
<div class="t" style="left:39.30px;width:37.30px;text-align:right;top:166.13px;">-3.78</div>
<div class="t" style="left:-0.60px;width:37.30px;text-align:right;top:178.80px;">-24.85</div>
<div class="t" style="left:39.30px;width:37.30px;text-align:right;top:178.80px;">-3.73</div>
<div class="t" style="left:-0.60px;width:37.30px;text-align:right;top:191.48px;">-23.13</div>
<div class="t" style="left:39.30px;width:37.30px;text-align:right;top:191.48px;">-3.68</div>
<div class="t" style="left:-0.60px;width:37.30px;text-align:right;top:204.15px;">-21.55</div>
<div class="t" style="left:39.30px;width:37.30px;text-align:right;top:204.15px;">-3.61</div>
<div class="t" style="left:-0.60px;width:37.30px;text-align:right;top:216.83px;">-20.06</div>
<div class="t" style="left:39.30px;width:37.30px;text-align:right;top:216.83px;">-3.54</div>
<div class="t" style="left:-0.60px;width:37.30px;text-align:right;top:229.50px;">-18.75</div>
<div class="t" style="left:39.30px;width:37.30px;text-align:right;top:229.50px;">-3.48</div>
<div class="t" style="left:-0.60px;width:37.30px;text-align:right;top:242.18px;">-17.49</div>
<div class="t" style="left:39.30px;width:37.30px;text-align:right;top:242.18px;">-3.40</div>
<div class="t" style="left:-0.60px;width:37.30px;text-align:right;top:254.85px;">-16.34</div>
<div class="t" style="left:39.30px;width:37.30px;text-align:right;top:254.85px;">-3.33</div>
<div class="t" style="left:-0.60px;width:37.30px;text-align:right;top:267.53px;">-15.28</div>
<div class="t" style="left:39.30px;width:37.30px;text-align:right;top:267.53px;">-3.26</div>
<div class="t" style="left:-0.60px;width:37.30px;text-align:right;top:280.20px;">-14.29</div>
<div class="t" style="left:39.30px;width:37.30px;text-align:right;top:280.20px;">-3.18</div>
</div>
<div class="r" style="left:234.60px;top:300.00px;width:282.60px;height:303.80px;background:#c9d0dd;"></div>
<div class="r" style="left:235.20px;top:300.60px;width:281.40px;height:13.10px;background:#f2f5fa;"></div>
<div class="r" style="left:272.90px;top:300.60px;width:0.80px;height:13.10px;background:#d9dee8;"></div>
<div class="r" style="left:311.70px;top:300.60px;width:0.80px;height:13.10px;background:#d9dee8;"></div>
<div class="r" style="left:350.10px;top:300.60px;width:0.80px;height:13.10px;background:#d9dee8;"></div>
<div class="r" style="left:388.90px;top:300.60px;width:0.80px;height:13.10px;background:#d9dee8;"></div>
<div class="r" style="left:427.70px;top:300.60px;width:0.80px;height:13.10px;background:#d9dee8;"></div>
<div class="r" style="left:466.50px;top:300.60px;width:0.80px;height:13.10px;background:#d9dee8;"></div>
<div class="r" style="left:506.10px;top:300.60px;width:0.80px;height:13.10px;background:#d9dee8;"></div>
<div class="t" style="top:301.55px;left:234.60px;width:38.599999999999994px;text-align:center;color:#4b5569;">Mid</div>
<div class="t" style="top:301.55px;left:273.20px;width:38.80000000000001px;text-align:center;color:#4b5569;">Delta</div>
<div class="t" style="top:301.55px;left:312.00px;width:38.39999999999998px;text-align:center;color:#4b5569;">Theta</div>
<div class="t" style="top:301.55px;left:350.40px;width:38.80000000000001px;text-align:center;color:#4b5569;letter-spacing:-0.486px;">OrigPrice</div>
<div class="t" style="top:301.55px;left:389.20px;width:38.80000000000001px;text-align:center;color:#4b5569;">IVChg</div>
<div class="t" style="top:301.55px;left:428.00px;width:38.80000000000001px;text-align:center;color:#4b5569;">Model</div>
<div class="t" style="top:301.55px;left:466.80px;width:39.599999999999966px;text-align:center;color:#4b5569;">Pos</div>
<div class="r" style="left:235.20px;top:314.10px;width:281.40px;height:289.10px;overflow:hidden;">
<div class="r" style="left:0;top:0.00px;width:271.20px;height:12.68px;background:#a9c1e0;box-shadow:inset 0 -0.8px 0 #bccde6;"></div>
<div class="r" style="left:0;top:12.68px;width:271.20px;height:12.68px;background:#a9c1e0;box-shadow:inset 0 -0.8px 0 #bccde6;"></div>
<div class="r" style="left:0;top:25.35px;width:271.20px;height:12.68px;background:#a9c1e0;box-shadow:inset 0 -0.8px 0 #bccde6;"></div>
<div class="r" style="left:0;top:38.03px;width:271.20px;height:12.68px;background:#a9c1e0;box-shadow:inset 0 -0.8px 0 #bccde6;"></div>
<div class="r" style="left:0;top:50.70px;width:271.20px;height:12.68px;background:#a9c1e0;box-shadow:inset 0 -0.8px 0 #bccde6;"></div>
<div class="r" style="left:0;top:63.38px;width:271.20px;height:12.68px;background:#a9c1e0;box-shadow:inset 0 -0.8px 0 #bccde6;"></div>
<div class="r" style="left:0;top:76.05px;width:271.20px;height:12.68px;background:#a9c1e0;box-shadow:inset 0 -0.8px 0 #bccde6;"></div>
<div class="r" style="left:0;top:88.73px;width:271.20px;height:12.68px;background:#a9c1e0;box-shadow:inset 0 -0.8px 0 #bccde6;"></div>
<div class="r" style="left:0;top:101.40px;width:271.20px;height:12.68px;background:#fffbea;box-shadow:inset 0 -0.8px 0 #e9e6da;"></div>
<div class="r" style="left:0;top:114.08px;width:271.20px;height:12.68px;background:#a9c1e0;box-shadow:inset 0 -0.8px 0 #bccde6;"></div>
<div class="r" style="left:0;top:126.75px;width:271.20px;height:12.68px;background:#a9c1e0;box-shadow:inset 0 -0.8px 0 #bccde6;"></div>
<div class="r" style="left:0;top:139.43px;width:271.20px;height:12.68px;background:#a9c1e0;box-shadow:inset 0 -0.8px 0 #bccde6;"></div>
<div class="r" style="left:0;top:152.10px;width:271.20px;height:12.68px;background:#a9c1e0;box-shadow:inset 0 -0.8px 0 #bccde6;"></div>
<div class="r" style="left:0;top:164.78px;width:271.20px;height:12.68px;background:#a9c1e0;box-shadow:inset 0 -0.8px 0 #bccde6;"></div>
<div class="r" style="left:0;top:177.45px;width:271.20px;height:12.68px;background:#a9c1e0;box-shadow:inset 0 -0.8px 0 #bccde6;"></div>
<div class="r" style="left:0;top:190.12px;width:271.20px;height:12.68px;background:#a9c1e0;box-shadow:inset 0 -0.8px 0 #bccde6;"></div>
<div class="r" style="left:0;top:202.80px;width:271.20px;height:12.68px;background:#a9c1e0;box-shadow:inset 0 -0.8px 0 #bccde6;"></div>
<div class="r" style="left:0;top:215.48px;width:271.20px;height:12.68px;background:#a9c1e0;box-shadow:inset 0 -0.8px 0 #bccde6;"></div>
<div class="r" style="left:0;top:228.15px;width:271.20px;height:12.68px;background:#a9c1e0;box-shadow:inset 0 -0.8px 0 #bccde6;"></div>
<div class="r" style="left:0;top:240.83px;width:271.20px;height:12.68px;background:#c7e6ea;box-shadow:inset 0 -0.8px 0 #dbe8ef;"></div>
<div class="r" style="left:0;top:253.50px;width:271.20px;height:12.68px;background:#c7e6ea;box-shadow:inset 0 -0.8px 0 #dbe8ef;"></div>
<div class="r" style="left:0;top:266.18px;width:271.20px;height:12.68px;background:#c7e6ea;box-shadow:inset 0 -0.8px 0 #dbe8ef;"></div>
<div class="r" style="left:0;top:278.85px;width:271.20px;height:12.68px;background:#c7e6ea;box-shadow:inset 0 -0.8px 0 #dbe8ef;"></div>
<div class="r" style="left:37.70px;top:0;width:0.8px;height:289.10px;background:rgba(255,255,255,0.36);"></div>
<div class="r" style="left:76.50px;top:0;width:0.8px;height:289.10px;background:rgba(255,255,255,0.36);"></div>
<div class="r" style="left:114.90px;top:0;width:0.8px;height:289.10px;background:rgba(255,255,255,0.36);"></div>
<div class="r" style="left:153.70px;top:0;width:0.8px;height:289.10px;background:rgba(255,255,255,0.36);"></div>
<div class="r" style="left:192.50px;top:0;width:0.8px;height:289.10px;background:rgba(255,255,255,0.36);"></div>
<div class="r" style="left:231.30px;top:0;width:0.8px;height:289.10px;background:rgba(255,255,255,0.36);"></div>
<div class="t" style="left:-0.60px;width:36.00px;text-align:right;top:1.35px;color:#e0313f;">172.75</div>
<div class="t" style="left:38.00px;width:36.20px;text-align:right;top:1.35px;">-64.51</div>
<div class="t" style="left:76.80px;width:35.80px;text-align:right;top:1.35px;">-2.29</div>
<div class="t" style="left:-0.60px;width:36.00px;text-align:right;top:14.03px;color:#e0313f;">159.75</div>
<div class="t" style="left:38.00px;width:36.20px;text-align:right;top:14.03px;">-60.77</div>
<div class="t" style="left:76.80px;width:35.80px;text-align:right;top:14.03px;">-2.50</div>
<div class="t" style="left:-0.60px;width:36.00px;text-align:right;top:26.70px;color:#e0313f;">147.75</div>
<div class="t" style="left:38.00px;width:36.20px;text-align:right;top:26.70px;">-57.12</div>
<div class="t" style="left:76.80px;width:35.80px;text-align:right;top:26.70px;">-2.68</div>
<div class="t" style="left:-0.60px;width:36.00px;text-align:right;top:39.38px;color:#e0313f;">136.70</div>
<div class="t" style="left:38.00px;width:36.20px;text-align:right;top:39.38px;">-53.59</div>
<div class="t" style="left:76.80px;width:35.80px;text-align:right;top:39.38px;">-2.84</div>
<div class="t" style="left:-0.60px;width:36.00px;text-align:right;top:52.05px;color:#e0313f;">126.90</div>
<div class="t" style="left:38.00px;width:36.20px;text-align:right;top:52.05px;">-50.20</div>
<div class="t" style="left:76.80px;width:35.80px;text-align:right;top:52.05px;">-2.98</div>
<div class="t" style="left:-0.60px;width:36.00px;text-align:right;top:64.73px;color:#e0313f;">117.30</div>
<div class="t" style="left:38.00px;width:36.20px;text-align:right;top:64.73px;">-46.99</div>
<div class="t" style="left:76.80px;width:35.80px;text-align:right;top:64.73px;">-3.08</div>
<div class="t" style="left:-0.60px;width:36.00px;text-align:right;top:77.40px;color:#e0313f;">108.75</div>
<div class="t" style="left:38.00px;width:36.20px;text-align:right;top:77.40px;">-43.94</div>
<div class="t" style="left:76.80px;width:35.80px;text-align:right;top:77.40px;">-3.17</div>
<div class="t" style="left:-0.60px;width:36.00px;text-align:right;top:90.08px;color:#e0313f;">100.85</div>
<div class="t" style="left:38.00px;width:36.20px;text-align:right;top:90.08px;">-41.06</div>
<div class="t" style="left:76.80px;width:35.80px;text-align:right;top:90.08px;">-3.23</div>
<div class="t" style="left:-0.60px;width:36.00px;text-align:right;top:102.75px;color:#e0313f;">93.40</div>
<div class="t" style="left:38.00px;width:36.20px;text-align:right;top:102.75px;">-38.34</div>
<div class="t" style="left:76.80px;width:35.80px;text-align:right;top:102.75px;">-3.27</div>
<div class="t" style="left:-0.60px;width:36.00px;text-align:right;top:115.43px;color:#e0313f;">86.75</div>
<div class="t" style="left:38.00px;width:36.20px;text-align:right;top:115.43px;">-35.79</div>
<div class="t" style="left:76.80px;width:35.80px;text-align:right;top:115.43px;">-3.29</div>
<div class="t" style="left:-0.60px;width:36.00px;text-align:right;top:128.10px;color:#e0313f;">80.75</div>
<div class="t" style="left:38.00px;width:36.20px;text-align:right;top:128.10px;">-33.42</div>
<div class="t" style="left:76.80px;width:35.80px;text-align:right;top:128.10px;">-3.31</div>
<div class="t" style="left:-0.60px;width:36.00px;text-align:right;top:140.78px;color:#e0313f;">74.95</div>
<div class="t" style="left:38.00px;width:36.20px;text-align:right;top:140.78px;">-31.18</div>
<div class="t" style="left:76.80px;width:35.80px;text-align:right;top:140.78px;">-3.30</div>
<div class="t" style="left:-0.60px;width:36.00px;text-align:right;top:153.45px;color:#e0313f;">69.65</div>
<div class="t" style="left:38.00px;width:36.20px;text-align:right;top:153.45px;">-29.09</div>
<div class="t" style="left:76.80px;width:35.80px;text-align:right;top:153.45px;">-3.28</div>
<div class="t" style="left:-0.60px;width:36.00px;text-align:right;top:166.13px;color:#e0313f;">64.90</div>
<div class="t" style="left:38.00px;width:36.20px;text-align:right;top:166.13px;">-27.15</div>
<div class="t" style="left:76.80px;width:35.80px;text-align:right;top:166.13px;">-3.26</div>
<div class="t" style="left:-0.60px;width:36.00px;text-align:right;top:178.80px;color:#e0313f;">60.45</div>
<div class="t" style="left:38.00px;width:36.20px;text-align:right;top:178.80px;">-25.34</div>
<div class="t" style="left:76.80px;width:35.80px;text-align:right;top:178.80px;">-3.22</div>
<div class="t" style="left:-0.60px;width:36.00px;text-align:right;top:191.48px;color:#e0313f;">56.40</div>
<div class="t" style="left:38.00px;width:36.20px;text-align:right;top:191.48px;">-23.66</div>
<div class="t" style="left:76.80px;width:35.80px;text-align:right;top:191.48px;">-3.18</div>
<div class="t" style="left:-0.60px;width:36.00px;text-align:right;top:204.15px;color:#e0313f;">52.80</div>
<div class="t" style="left:38.00px;width:36.20px;text-align:right;top:204.15px;">-22.12</div>
<div class="t" style="left:76.80px;width:35.80px;text-align:right;top:204.15px;">-3.14</div>
<div class="t" style="left:-0.60px;width:36.00px;text-align:right;top:216.83px;color:#e0313f;">49.20</div>
<div class="t" style="left:38.00px;width:36.20px;text-align:right;top:216.83px;">-20.65</div>
<div class="t" style="left:76.80px;width:35.80px;text-align:right;top:216.83px;">-3.08</div>
<div class="t" style="left:-0.60px;width:36.00px;text-align:right;top:229.50px;color:#e0313f;">46.05</div>
<div class="t" style="left:38.00px;width:36.20px;text-align:right;top:229.50px;">-19.30</div>
<div class="t" style="left:76.80px;width:35.80px;text-align:right;top:229.50px;">-3.03</div>
<div class="t" style="left:-0.60px;width:36.00px;text-align:right;top:242.18px;color:#e0313f;">43.25</div>
<div class="t" style="left:38.00px;width:36.20px;text-align:right;top:242.18px;">-18.08</div>
<div class="t" style="left:76.80px;width:35.80px;text-align:right;top:242.18px;">-2.97</div>
<div class="t" style="left:-0.60px;width:36.00px;text-align:right;top:254.85px;color:#e0313f;">40.50</div>
<div class="t" style="left:38.00px;width:36.20px;text-align:right;top:254.85px;">-16.91</div>
<div class="t" style="left:76.80px;width:35.80px;text-align:right;top:254.85px;">-2.91</div>
<div class="t" style="left:-0.60px;width:36.00px;text-align:right;top:267.53px;color:#e0313f;">38.05</div>
<div class="t" style="left:38.00px;width:36.20px;text-align:right;top:267.53px;">-15.85</div>
<div class="t" style="left:76.80px;width:35.80px;text-align:right;top:267.53px;">-2.85</div>
<div class="t" style="left:-0.60px;width:36.00px;text-align:right;top:280.20px;color:#e0313f;">35.80</div>
<div class="t" style="left:38.00px;width:36.20px;text-align:right;top:280.20px;">-14.86</div>
<div class="t" style="left:76.80px;width:35.80px;text-align:right;top:280.20px;">-2.79</div>
</div>
<div class="r" style="left:506.40px;top:314.10px;width:10.20px;height:289.10px;background:#d3d9e7;"></div>
<div class="r" style="left:508.70px;top:412.70px;width:6.20px;height:24.70px;background:#97a1b8;border-radius:0.5px;"></div>
<svg width="540" height="675"><path d="M509.0 321.3 h5.6 l-2.8 -3.4 z M509.0 595.8000000000001 h5.6 l-2.8 3.4 z" fill="#5d6577"/></svg>
<div class="r" style="left:-10.00px;top:613.90px;width:75.50px;height:12.40px;background:#ffffff;box-sizing:border-box;border:1px solid #b0b7c6;"></div>
<div class="t" style="top:615.15px;left:-1.50px;">d</div>
<div class="r" style="left:71.20px;top:613.90px;width:52.40px;height:12.40px;background:#ffffff;box-sizing:border-box;border:1px solid #b0b7c6;"></div>
<div class="t" style="top:615.15px;left:74.60px;">Auto</div>
<svg width="540" height="675"><path d="M57.2 619 h4.8 l-2.4 2.9 z M115.8 619 h4.8 l-2.4 2.9 z" fill="#4d5566"/></svg>
<div class="r" style="left:422.80px;top:615.40px;width:8.60px;height:8.60px;background:#ffffff;box-sizing:border-box;border:1px solid #aab2c2;"></div>
<div class="t" style="top:614.75px;left:434.20px;color:#2f3747;letter-spacing:-0.263px;">Ignore Today's Trades</div>
<div class="r" style="left:-2.20px;top:629.80px;width:520.80px;height:38.60px;background:#ffffff;box-sizing:border-box;border:1px solid #c3cad8;"></div>
<div class="r" style="left:-2.20px;top:630.30px;width:520.30px;height:12.60px;background:#f2f5fa;"></div>
<div class="r" style="left:-2.20px;top:642.80px;width:520.30px;height:0.80px;background:#d5dbe6;"></div>
<div class="r" style="left:-2.20px;top:655.60px;width:520.30px;height:0.80px;background:#dfe4ed;"></div>
<div class="r" style="left:44.20px;top:630.30px;width:0.80px;height:37.60px;background:#d5dbe6;"></div>
<div class="r" style="left:91.00px;top:630.30px;width:0.80px;height:37.60px;background:#d5dbe6;"></div>
<div class="r" style="left:137.70px;top:630.30px;width:0.80px;height:37.60px;background:#d5dbe6;"></div>
<div class="r" style="left:184.30px;top:630.30px;width:0.80px;height:37.60px;background:#d5dbe6;"></div>
<div class="r" style="left:231.00px;top:630.30px;width:0.80px;height:37.60px;background:#d5dbe6;"></div>
<div class="r" style="left:277.70px;top:630.30px;width:0.80px;height:37.60px;background:#d5dbe6;"></div>
<div class="r" style="left:324.30px;top:630.30px;width:0.80px;height:37.60px;background:#d5dbe6;"></div>
<div class="r" style="left:371.00px;top:630.30px;width:0.80px;height:37.60px;background:#d5dbe6;"></div>
<div class="r" style="left:417.70px;top:630.30px;width:0.80px;height:37.60px;background:#d5dbe6;"></div>
<div class="r" style="left:464.30px;top:630.30px;width:0.80px;height:37.60px;background:#d5dbe6;"></div>
<div class="t" style="top:631.15px;left:-2.20px;width:46.7px;text-align:center;color:#4b5569;">Cost</div>
<div class="t" style="top:631.15px;left:44.50px;width:46.8px;text-align:center;color:#4b5569;letter-spacing:-0.505px;">Curr Cost</div>
<div class="t" style="top:631.15px;left:91.30px;width:46.7px;text-align:center;color:#4b5569;letter-spacing:-0.711px;">Commission</div>
<div class="t" style="top:631.15px;left:138.00px;width:46.599999999999994px;text-align:center;color:#4b5569;">PnL</div>
<div class="t" style="top:631.15px;left:184.60px;width:46.70000000000002px;text-align:center;color:#4b5569;">PnL%</div>
<div class="t" style="top:631.15px;left:231.30px;width:46.69999999999999px;text-align:center;color:#4b5569;">Delta</div>
<div class="t" style="top:631.15px;left:278.00px;width:46.60000000000002px;text-align:center;color:#4b5569;">Gamma</div>
<div class="t" style="top:631.15px;left:324.60px;width:46.69999999999999px;text-align:center;color:#4b5569;">Theta</div>
<div class="t" style="top:631.15px;left:371.30px;width:46.69999999999999px;text-align:center;color:#4b5569;">Vega</div>
<div class="t" style="top:631.15px;left:418.00px;width:46.60000000000002px;text-align:center;color:#4b5569;">T/D</div>
<div class="t" style="top:631.15px;left:464.60px;width:54.0px;text-align:center;color:#4b5569;">Plot</div>
<div class="t" style="top:644.55px;left:-1.80px;width:43.7px;text-align:right;">-22,883.19</div>
<div class="t" style="top:644.55px;left:44.90px;width:43.8px;text-align:right;">22,010.00</div>
<div class="t" style="top:644.55px;left:91.70px;width:43.7px;text-align:right;">18.20</div>
<div class="t" style="top:644.55px;left:138.40px;width:43.599999999999994px;text-align:right;color:#e0313f;">-873.19</div>
<div class="t" style="top:644.55px;left:185.00px;width:43.70000000000002px;text-align:right;color:#e0313f;">-6.47%</div>
<div class="t" style="top:644.55px;left:231.70px;width:43.69999999999999px;text-align:right;">12.71</div>
<div class="t" style="top:644.55px;left:278.40px;width:43.60000000000002px;text-align:right;">-0.07</div>
<div class="t" style="top:644.55px;left:325.00px;width:43.69999999999999px;text-align:right;">260.88</div>
<div class="t" style="top:644.55px;left:371.70px;width:43.69999999999999px;text-align:right;">1141.27</div>
<div class="t" style="top:644.55px;left:418.40px;width:43.60000000000002px;text-align:right;">20.5</div>
<div class="r" style="left:487.40px;top:645.40px;width:8.40px;height:8.40px;background:#ffffff;box-sizing:border-box;border:1px solid #aab2c2;"></div>
<svg width="540" height="675"><path d="M489.3 649.6 l2 2.2 l3.4 -4.6" stroke="#4d5566" stroke-width="0.9" fill="none"/></svg>
<div class="t" style="top:657.35px;left:-1.80px;width:43.7px;text-align:right;">-24,209.59</div>
<div class="t" style="top:657.35px;left:44.90px;width:43.8px;text-align:right;">23,335.00</div>
<div class="t" style="top:657.35px;left:91.70px;width:43.7px;text-align:right;">19.60</div>
<div class="t" style="top:657.35px;left:138.40px;width:43.599999999999994px;text-align:right;color:#e0313f;">-874.59</div>
<div class="t" style="top:657.35px;left:185.00px;width:43.70000000000002px;text-align:right;color:#e0313f;">-3.59%</div>
<div class="t" style="top:657.35px;left:231.70px;width:43.69999999999999px;text-align:right;">8.76</div>
<div class="t" style="top:657.35px;left:278.40px;width:43.60000000000002px;text-align:right;">-0.07</div>
<div class="t" style="top:657.35px;left:325.00px;width:43.69999999999999px;text-align:right;">286.55</div>
<div class="t" style="top:657.35px;left:371.70px;width:43.69999999999999px;text-align:right;">1122.67</div>
<div class="t" style="top:657.35px;left:418.40px;width:43.60000000000002px;text-align:right;">32.7</div>
<div class="r" style="left:487.40px;top:658.20px;width:8.40px;height:8.40px;background:#ffffff;box-sizing:border-box;border:1px solid #aab2c2;"></div>
<svg width="540" height="675"><path d="M489.3 662.4 l2 2.2 l3.4 -4.6" stroke="#4d5566" stroke-width="0.9" fill="none"/></svg>
<div class="r" style="left:526.20px;top:108.80px;width:0.80px;height:560.00px;background:#e4e8f1;"></div>
<div class="r" style="left:526.80px;top:108.80px;width:553.20px;height:36.00px;background:#dde2ee;"></div>
<div class="r" style="left:577.40px;top:127.00px;width:503.00px;height:0.80px;background:#aeb6c7;"></div>
<div class="r" style="left:527.20px;top:110.30px;width:50.20px;height:17.80px;background:#dde2ee;box-sizing:border-box;border:0.8px solid #c2c9d8;border-bottom:none;"></div>
<div class="t" style="top:114.15px;left:527.20px;width:50.19999999999993px;text-align:center;color:#2f3747;letter-spacing:-0.697px;">Risk Chart</div>
<div class="r" style="left:577.40px;top:110.30px;width:54.00px;height:17.20px;background:#cdd4e4;box-sizing:border-box;border:0.8px solid #a9b2c4;border-left:none;"></div>
<div class="t" style="top:114.15px;left:577.40px;width:54.0px;text-align:center;color:#2f3747;letter-spacing:-0.509px;">Price Chart</div>
<div class="r" style="left:631.40px;top:110.30px;width:82.40px;height:17.20px;background:#cdd4e4;box-sizing:border-box;border:0.8px solid #a9b2c4;border-left:none;"></div>
<div class="t" style="top:114.15px;left:631.40px;width:82.39999999999998px;text-align:center;color:#2f3747;letter-spacing:-0.47px;">Movement Analysis</div>
<div class="r" style="left:713.80px;top:110.30px;width:46.40px;height:17.20px;background:#cdd4e4;box-sizing:border-box;border:0.8px solid #a9b2c4;border-left:none;"></div>
<div class="t" style="top:114.15px;left:713.80px;width:46.40000000000009px;text-align:center;color:#2f3747;letter-spacing:-0.228px;">Volatility</div>
<div class="r" style="left:760.20px;top:110.30px;width:107.20px;height:17.20px;background:#cdd4e4;box-sizing:border-box;border:0.8px solid #a9b2c4;border-left:none;"></div>
<div class="t" style="top:114.15px;left:760.20px;width:107.19999999999993px;text-align:center;color:#2f3747;letter-spacing:-0.424px;">Statistics &amp; Fundamentals</div>
<div class="t" style="top:131.55px;left:531.20px;color:#2f3747;letter-spacing:-0.234px;">Vol Adjust</div>
<div class="r" style="left:572.20px;top:129.80px;width:34.80px;height:13.20px;background:#ffffff;box-sizing:border-box;border:1px solid #b0b7c6;"></div>
<div class="t" style="top:131.55px;left:589.20px;">0</div>
<div class="t" style="top:131.75px;left:1015.60px;color:#2f3747;letter-spacing:-0.323px;">Projection</div>
<div class="r" style="left:1055.20px;top:129.90px;width:30.00px;height:13.40px;background:#ffffff;box-sizing:border-box;border:1px solid #b0b7c6;"></div>
<div class="t" style="top:131.75px;left:1057.60px;letter-spacing:0px;">20/11,</div>
<div class="r" style="left:527.40px;top:144.70px;width:553.00px;height:507.00px;background:#ffffff;"></div>
<div class="r" style="left:526.20px;top:144.70px;width:1.30px;height:523.50px;background:#c9d0df;"></div>
<div class="r" style="left:527.40px;top:651.70px;width:553.00px;height:16.40px;background:#293955;"></div>
<div class="t" style="top:655.15px;left:1059.40px;color:#ffffff;">140%</div>
<svg width="1080" height="675" viewBox="0 0 1080 675" font-size="7.35" style="letter-spacing:0;word-spacing:0">
<defs><clipPath id="plot"><rect x="564.4" y="157.2" width="520" height="355.2"/></clipPath></defs>
<rect x="711.7" y="157.6" width="108.6" height="354.6" fill="#8fc9da"/>
<rect x="738.9" y="157.6" width="54.8" height="354.6" fill="#4d7fbd"/>
<rect x="789.6" y="157.6" width="4.1" height="354.6" fill="#5888c3"/>
<path d="M561.6 157.60 H1080 M561.6 174.48 H1080 M561.6 191.36 H1080 M561.6 208.24 H1080 M561.6 225.12 H1080 M561.6 242.00 H1080 M561.6 258.88 H1080 M561.6 275.76 H1080 M561.6 292.64 H1080 M561.6 309.52 H1080 M561.6 326.40 H1080 M561.6 343.28 H1080 M561.6 360.16 H1080 M561.6 377.04 H1080 M561.6 393.92 H1080 M561.6 410.80 H1080 M561.6 427.68 H1080 M561.6 444.56 H1080 M561.6 461.44 H1080 M561.6 478.32 H1080 M561.6 495.20 H1080 M561.6 512.08 H1080 M584.80 154.8 V512.1 M625.77 154.8 V512.1 M666.75 154.8 V512.1 M707.72 154.8 V512.1 M748.70 154.8 V512.1 M789.67 154.8 V512.1 M830.65 154.8 V512.1 M871.62 154.8 V512.1 M912.60 154.8 V512.1 M953.57 154.8 V512.1 M994.55 154.8 V512.1 M1035.53 154.8 V512.1 M1076.50 154.8 V512.1 M564.4 157.6 V512.1" stroke="#e6e6e9" stroke-width="0.9" fill="none"/>
<path d="M711.7 157.60 H820.3 M711.7 174.48 H820.3 M711.7 191.36 H820.3 M711.7 208.24 H820.3 M711.7 225.12 H820.3 M711.7 242.00 H820.3 M711.7 258.88 H820.3 M711.7 275.76 H820.3 M711.7 292.64 H820.3 M711.7 309.52 H820.3 M711.7 326.40 H820.3 M711.7 343.28 H820.3 M711.7 360.16 H820.3 M711.7 377.04 H820.3 M711.7 393.92 H820.3 M711.7 410.80 H820.3 M711.7 427.68 H820.3 M711.7 444.56 H820.3 M711.7 461.44 H820.3 M711.7 478.32 H820.3 M711.7 495.20 H820.3 M711.7 512.08 H820.3" stroke="#ffffff" stroke-opacity="0.33" stroke-width="0.8" fill="none"/>
<path d="M748.6 157.6 V512.1 M789.8 157.6 V512.1" stroke="#ffffff" stroke-opacity="0.42" stroke-width="0.8" fill="none"/>
<path d="M705.58 157.6 V512.1" stroke="#b84fc0" stroke-width="1.3" stroke-dasharray="2.6 3.3" fill="none"/>
<path d="M850.63 157.6 V512.1" stroke="#b84fc0" stroke-width="1.3" stroke-dasharray="2.6 3.3" fill="none"/>
<path d="M883.52 157.6 V512.1" stroke="#b84fc0" stroke-width="1.3" stroke-dasharray="2.6 3.3" fill="none"/>
<path d="M928.00 157.6 V512.1" stroke="#b84fc0" stroke-width="1.3" stroke-dasharray="2.6 3.3" fill="none"/>
<path d="M564.4 292.3 H1080" stroke="#686868" stroke-width="1.7" fill="none"/>
<g clip-path="url(#plot)" fill="none" stroke-linejoin="round">
<path d="M742.7 298.6 C743.7 298.4 744.4 298.3 748.9 297.6 C753.4 296.9 762.4 295.3 770.0 294.2 C777.6 293.1 788.1 291.8 794.8 291.2 C801.5 290.6 806.2 290.6 810.0 290.4 C813.8 290.2 816.5 290.2 817.8 290.2" stroke="#b89a92" stroke-opacity="0.85" stroke-width="3.2"/>
<path d="M742.7 302.6 C743.7 302.4 744.4 302.0 748.9 301.2 C753.4 300.4 763.1 298.7 770.0 297.8 C776.9 296.9 785.0 296.1 790.0 295.6 C795.0 295.1 795.4 295.0 800.0 294.6 C804.6 294.2 814.8 293.4 817.8 293.2" stroke="#b89a92" stroke-opacity="0.85" stroke-width="3.2"/>
<path d="M564.8 360.5 C568.1 359.4 574.7 357.4 584.9 353.8 C595.1 350.2 612.2 343.8 625.8 338.7 C639.4 333.6 654.3 327.7 666.7 323.2 C679.1 318.7 691.1 314.3 700.0 311.5 C708.9 308.7 714.1 307.8 720.0 306.3 C725.9 304.8 733.0 303.2 735.6 302.6" stroke="#f46464" stroke-width="1.15"/>
<path d="M735.6 302.6 C737.8 302.0 743.2 300.3 748.9 299.1 C754.6 297.9 762.4 296.5 770.0 295.4 C777.6 294.3 788.1 293.0 794.8 292.4 C801.5 291.8 805.8 291.8 810.0 291.7 C814.2 291.6 815.8 291.4 820.0 291.7 C824.2 292.0 830.0 292.5 835.0 293.4 C840.0 294.3 843.8 295.1 850.2 296.9 C856.6 298.7 869.4 302.8 873.3 304.0" stroke="#a9b4f0" stroke-width="0.9"/>
<path d="M873.3 304.0 C876.3 305.5 884.6 309.0 891.1 312.9 C897.6 316.8 906.2 323.0 912.4 327.1 C918.6 331.2 923.1 333.8 928.4 337.8 C933.7 341.8 938.8 346.4 944.4 351.1 C950.0 355.8 956.3 361.3 962.2 366.2 C968.1 371.1 974.6 376.0 980.0 380.4 C985.4 384.8 988.7 387.6 994.7 392.4 C1000.7 397.2 1009.2 404.2 1016.0 409.3 C1022.8 414.4 1028.5 418.2 1035.6 422.7 C1042.7 427.1 1051.3 431.9 1058.7 436.0 C1066.1 440.1 1076.5 445.3 1080.0 447.2" stroke="#f46464" stroke-width="1.15"/>
<path d="M564.8 369.8 C568.1 368.7 574.7 367.0 584.9 363.2 C595.1 359.4 612.2 352.8 625.8 347.2 C639.4 341.6 654.3 335.0 666.7 329.8 C679.1 324.6 691.1 319.3 700.0 315.9 C708.9 312.5 714.1 311.4 720.0 309.3 C725.9 307.2 733.0 304.6 735.6 303.6" stroke="#f46464" stroke-width="1.15"/>
<path d="M735.6 303.6 C737.8 303.0 743.2 300.8 748.9 299.7 C754.6 298.6 763.1 297.6 770.0 296.9 C776.9 296.2 785.0 295.6 790.0 295.3 C795.0 295.0 795.0 294.9 800.0 295.1 C805.0 295.3 814.2 296.0 820.0 296.7 C825.8 297.4 830.0 298.4 835.0 299.5 C840.0 300.6 847.7 302.9 850.2 303.6" stroke="#7cc67c" stroke-width="0.9"/>
<path d="M850.2 303.6 C854.1 305.0 866.5 309.0 873.3 312.0 C880.1 315.0 884.6 317.8 891.1 321.8 C897.6 325.8 906.2 331.7 912.4 336.0 C918.6 340.3 923.1 343.5 928.4 347.6 C933.7 351.8 938.8 356.0 944.4 360.9 C950.0 365.8 956.3 371.7 962.2 376.9 C968.1 382.1 974.6 387.5 980.0 392.0 C985.4 396.5 988.7 399.3 994.7 404.0 C1000.7 408.7 1009.2 415.1 1016.0 420.0 C1022.8 424.9 1028.5 428.7 1035.6 433.3 C1042.7 437.9 1051.3 443.5 1058.7 447.6 C1066.1 451.8 1076.5 456.4 1080.0 458.2" stroke="#f46464" stroke-width="1.15"/>
<path d="M564.8 382.2 C568.1 381.3 578.3 378.9 584.9 376.9 C591.5 374.9 597.6 373.0 604.4 370.3 C611.2 367.6 619.0 364.2 625.8 360.9 C632.6 357.5 638.5 354.3 645.3 350.2 C652.1 346.1 660.2 341.2 666.7 336.5 C673.2 331.8 679.4 326.2 684.4 321.8 C689.4 317.4 693.3 313.6 696.9 310.2 C700.5 306.8 702.5 304.8 705.8 301.3 C709.0 297.8 711.9 294.6 716.4 289.4 C720.9 284.2 726.8 278.4 732.9 270.0 C739.0 261.6 746.3 249.8 753.3 239.0 C760.3 228.2 768.9 214.2 774.7 205.1 C780.5 196.0 785.8 188.1 788.0 184.7 Q789.6 182.2 791.5 182 L796.5 182.4 Q799.4 182.8 801.3 185.8 L844.9 270 L871.9 312.4 L912.8 197.8 L953.8 406.3  C955.2 407.4 958.8 410.8 962.0 413.2 C965.2 415.6 967.8 417.4 973.3 420.9 C978.8 424.3 987.6 429.9 994.7 433.9 C1001.8 437.9 1009.2 441.7 1016.0 444.9 C1022.8 448.1 1028.5 450.5 1035.6 453.2 C1042.7 455.9 1051.3 458.7 1058.7 460.9 C1066.1 463.1 1074.8 465.2 1080.0 466.6 C1085.2 468.0 1088.3 468.6 1090.0 469.0" stroke="#4f4fd0" stroke-width="1.5"/>
<path d="M564.8 372.1 C568.1 371.3 578.3 369.1 584.9 367.1 C591.5 365.1 597.6 362.8 604.4 360.0 C611.2 357.2 619.0 353.6 625.8 350.2 C632.6 346.8 638.5 343.8 645.3 339.6 C652.1 335.5 660.2 330.1 666.7 325.3 C673.2 320.6 679.4 315.4 684.4 311.1 C689.4 306.8 693.3 303.0 696.9 299.6 C700.5 296.2 702.5 294.3 705.8 291.0 C709.0 287.7 713.4 283.5 716.4 280.0 C719.4 276.5 718.7 277.2 724.0 270.0 C729.3 262.8 740.1 248.1 748.0 237.0 C755.9 225.9 764.2 214.2 771.1 203.5 C778.0 192.8 786.4 177.9 789.5 172.8 L838.7 270 L871.9 323.6 L912.8 209.3 L953.8 416.4  C955.2 417.6 958.8 421.1 962.0 423.6 C965.2 426.1 967.8 428.1 973.3 431.6 C978.8 435.1 987.6 440.5 994.7 444.5 C1001.8 448.5 1009.2 452.4 1016.0 455.6 C1022.8 458.8 1028.5 460.9 1035.6 463.6 C1042.7 466.3 1051.3 469.3 1058.7 471.6 C1066.1 473.9 1074.8 476.0 1080.0 477.4 C1085.2 478.8 1088.3 479.4 1090.0 479.8" stroke="#128a12" stroke-width="1.6"/>
</g>
<circle cx="748.9" cy="299.3" r="2.9" fill="#d11414" stroke="#5a1a1a" stroke-width="0.8"/>
<text transform="translate(719.6 185.2) rotate(-90)" fill="#5f9cc4" font-size="7.35">6510.05</text>
<text transform="translate(747.2 185.2) rotate(-90)" fill="#8fb2de" font-size="7.35">6576.11</text>
<text transform="translate(794.4 185.2) rotate(-90)" fill="#8fb2de" font-size="7.35">6708.77</text>
<text transform="translate(819.0 185.2) rotate(-90)" fill="#5f9cc4" font-size="7.35">6774.27</text>
<rect x="567.6" y="480.4" width="62.2" height="28" rx="3.2" fill="#eef2f9" fill-opacity="0.88" stroke="#9aa4b8" stroke-width="0.9"/>
<text x="573" y="492.7" fill="#62b862">05/12/2025 (0)</text><text x="573" y="501.7" fill="#86d086">20/11/2025 (15)</text>
<text transform="translate(704.4 509.6) rotate(-90)" fill="#a03cb0" font-size="7.35">6494.76</text>
<text transform="translate(849.4 509.6) rotate(-90)" fill="#a03cb0" font-size="7.35">6848.77</text>
<text transform="translate(882.0 509.6) rotate(-90)" fill="#a03cb0" font-size="7.35">6929.02</text>
<text transform="translate(926.6 509.6) rotate(-90)" fill="#a03cb0" font-size="7.35">7037.58</text>
<text x="625.2" y="505.9" fill="#a03cb0">35.6%</text>
<text x="768.4" y="505.9" fill="#a03cb0">42.4%</text>
<text x="859" y="505.9" fill="#a03cb0">6.7%</text>
<text x="898" y="505.9" fill="#a03cb0">6.6%</text>
<text x="1027" y="505.9" fill="#a03cb0">8.7%</text>
<text x="559.6" y="160.1" text-anchor="end" fill="#333">119%</text>
<text x="559.6" y="177.0" text-anchor="end" fill="#333">104%</text>
<text x="559.6" y="193.9" text-anchor="end" fill="#333">89%</text>
<text x="559.6" y="210.7" text-anchor="end" fill="#333">74%</text>
<text x="559.6" y="227.6" text-anchor="end" fill="#333">59%</text>
<text x="559.6" y="244.5" text-anchor="end" fill="#333">44%</text>
<text x="559.6" y="261.4" text-anchor="end" fill="#333">30%</text>
<text x="559.6" y="278.3" text-anchor="end" fill="#333">15%</text>
<text x="559.6" y="295.1" text-anchor="end" fill="#333">0%</text>
<text x="559.6" y="312.0" text-anchor="end" fill="#333">-15%</text>
<text x="559.6" y="328.9" text-anchor="end" fill="#333">-30%</text>
<text x="559.6" y="345.8" text-anchor="end" fill="#333">-44%</text>
<text x="559.6" y="362.7" text-anchor="end" fill="#333">-59%</text>
<text x="559.6" y="379.5" text-anchor="end" fill="#333">-74%</text>
<text x="559.6" y="396.4" text-anchor="end" fill="#333">-89%</text>
<text x="559.6" y="413.3" text-anchor="end" fill="#333">-104%</text>
<text x="559.6" y="430.2" text-anchor="end" fill="#333">-119%</text>
<text x="559.6" y="447.1" text-anchor="end" fill="#333">-133%</text>
<text x="559.6" y="463.9" text-anchor="end" fill="#333">-148%</text>
<text x="559.6" y="480.8" text-anchor="end" fill="#333">-163%</text>
<text x="559.6" y="497.7" text-anchor="end" fill="#333">-178%</text>
<text x="559.6" y="514.6" text-anchor="end" fill="#333">-193%</text>
<rect x="531" y="294.4" width="30" height="9" fill="#cc0a0a"/>
<text x="559.6" y="302.2" text-anchor="end" fill="#fff">-6%</text>
<text x="585.1" y="152.7" text-anchor="middle" fill="#333">-6.7%</text>
<text x="626.1" y="152.7" text-anchor="middle" fill="#333">-5.2%</text>
<text x="667.0" y="152.7" text-anchor="middle" fill="#333">-3.6%</text>
<text x="708.0" y="152.7" text-anchor="middle" fill="#333">-2.1%</text>
<rect x="737.9" y="146" width="22.2" height="7.8" fill="#fff" stroke="#555" stroke-width="0.7"/>
<text x="749.0" y="152.7" text-anchor="middle" fill="#333">-0.6%</text>
<text x="790.0" y="152.7" text-anchor="middle" fill="#333">0.9%</text>
<text x="830.9" y="152.7" text-anchor="middle" fill="#333">2.4%</text>
<text x="871.9" y="152.7" text-anchor="middle" fill="#333">3.9%</text>
<text x="912.9" y="152.7" text-anchor="middle" fill="#333">5.4%</text>
<text x="953.9" y="152.7" text-anchor="middle" fill="#333">6.9%</text>
<text x="994.8" y="152.7" text-anchor="middle" fill="#333">8.4%</text>
<text x="1035.8" y="152.7" text-anchor="middle" fill="#333">9.9%</text>
<text x="1076.8" y="152.7" text-anchor="middle" fill="#333">11.4%</text>
<text x="585.1" y="522.7" text-anchor="middle" fill="#333">6200</text>
<text x="626.1" y="522.7" text-anchor="middle" fill="#333">6300</text>
<text x="667.0" y="522.7" text-anchor="middle" fill="#333">6400</text>
<text x="708.0" y="522.7" text-anchor="middle" fill="#333">6500</text>
<text x="790.0" y="522.7" text-anchor="middle" fill="#333">6700</text>
<text x="830.9" y="522.7" text-anchor="middle" fill="#333">6800</text>
<text x="871.9" y="522.7" text-anchor="middle" fill="#333">6900</text>
<text x="912.9" y="522.7" text-anchor="middle" fill="#333">7000</text>
<text x="953.9" y="522.7" text-anchor="middle" fill="#333">7100</text>
<text x="994.8" y="522.7" text-anchor="middle" fill="#333">7200</text>
<text x="1035.8" y="522.7" text-anchor="middle" fill="#333">7300</text>
<text x="1076.8" y="522.7" text-anchor="middle" fill="#333">7400</text>
<rect x="567.6" y="160.4" width="113.4" height="93.8" rx="3.2" fill="#eef2f9" fill-opacity="0.88" stroke="#9aa4b8" stroke-width="0.9"/>
<rect x="572.9" y="165.4" width="2.2" height="9.2" fill="#e84646"/>
<rect x="572.9" y="174.6" width="2.2" height="18.6" fill="#4fb04f"/>
<rect x="572.9" y="193.2" width="2.2" height="56" fill="#8090ee"/>
<g font-size="7.25" style="word-spacing:1.1px">
<text x="575.6" y="172.6" fill="#555">-13,420.69 Realized PnL</text>
<text x="575.6" y="182.2" fill="#555">+1</text><text x="585.8" y="182.2" fill="#5c5cf0">05dic. 6725 Put Δ</text><text x="672.3" y="182.2" fill="#5c5cf0" text-anchor="end">-65.72</text>
<text x="575.6" y="191.5" fill="#555">-1</text><text x="584.9" y="191.5" fill="#ee5a5a">05dic. 6700 Put Δ</text><text x="671.2" y="191.5" fill="#ee5a5a" text-anchor="end">-61.77</text>
<text x="575.6" y="200.9" fill="#555">+2</text><text x="585.8" y="200.9" fill="#5c5cf0">05dic. 6900 Call Δ</text><text x="675.4" y="200.9" fill="#5c5cf0" text-anchor="end">9.36</text>
<text x="575.6" y="210.2" fill="#555">+2</text><text x="585.8" y="210.2" fill="#5c5cf0">05dic. 7100 Call Δ</text><text x="675.4" y="210.2" fill="#5c5cf0" text-anchor="end">0.94</text>
<text x="575.6" y="219.5" fill="#555">+2</text><text x="586.8" y="219.5" fill="#5c5cf0">16ene. 6800 Put Δ</text><text x="674.8" y="219.5" fill="#5c5cf0" text-anchor="end">-58.43</text>
<text x="575.6" y="228.8" fill="#555">-4</text><text x="584.9" y="228.8" fill="#ee5a5a">05dic. 7000 Call Δ</text><text x="673.2" y="228.8" fill="#ee5a5a" text-anchor="end">2.91</text>
<text x="575.6" y="238.2" fill="#555">-1</text><text x="584.9" y="238.2" fill="#ee5a5a">05dic. 6725 Put Δ</text><text x="670.8" y="238.2" fill="#ee5a5a" text-anchor="end">-65.72</text>
<text x="575.6" y="247.5" fill="#555">-1</text><text x="584.9" y="247.5" fill="#ee5a5a">05dic. 6700 Put Δ</text><text x="670.8" y="247.5" fill="#ee5a5a" text-anchor="end">-61.77</text>
</g>
<rect x="530.4" y="525.8" width="560" height="122.2" rx="3.2" fill="#e8eff8" stroke="#8a93a8" stroke-width="0.9"/>
<text x="585.5" y="536.7" text-anchor="middle" fill="#f07c7c">-55%</text>
<text x="626.5" y="536.7" text-anchor="middle" fill="#f07c7c">-42%</text>
<text x="667.5" y="536.7" text-anchor="middle" fill="#f07c7c">-28%</text>
<text x="708.4" y="536.7" text-anchor="middle" fill="#f07c7c">-15%</text>
<text x="790.4" y="536.7" text-anchor="middle" fill="#f07c7c">-3%</text>
<text x="831.4" y="536.7" text-anchor="middle" fill="#f07c7c">-6%</text>
<text x="872.3" y="536.7" text-anchor="middle" fill="#f07c7c">-17%</text>
<text x="913.3" y="536.7" text-anchor="middle" fill="#f07c7c">-39%</text>
<text x="954.3" y="536.7" text-anchor="middle" fill="#f07c7c">-68%</text>
<text x="995.2" y="536.7" text-anchor="middle" fill="#f07c7c">-98%</text>
<text x="1036.2" y="536.7" text-anchor="middle" fill="#f07c7c">-125%</text>
<text x="1077.2" y="536.7" text-anchor="middle" fill="#f07c7c">-148%</text>
<rect x="564.6" y="544.4" width="41.0" height="2.2" fill="#f27474" stroke="#6a4a4a" stroke-width="0.6"/>
<text x="585.5" y="543.7" text-anchor="middle" fill="#f07c7c">-7365</text>
<rect x="605.6" y="544.4" width="41.0" height="1.7" fill="#f27474" stroke="#6a4a4a" stroke-width="0.6"/>
<text x="626.5" y="543.7" text-anchor="middle" fill="#f07c7c">-5611</text>
<rect x="646.6" y="544.4" width="41.0" height="1.1" fill="#f27474" stroke="#6a4a4a" stroke-width="0.6"/>
<text x="667.4" y="543.7" text-anchor="middle" fill="#f07c7c">-3748</text>
<text x="708.4" y="543.7" text-anchor="middle" fill="#f07c7c">-2083</text>
<text x="790.4" y="543.7" text-anchor="middle" fill="#f07c7c">-372</text>
<text x="831.3" y="543.7" text-anchor="middle" fill="#f07c7c">-760</text>
<rect x="851.4" y="544.4" width="41.0" height="0.7" fill="#f27474" stroke="#6a4a4a" stroke-width="0.6"/>
<text x="872.3" y="543.7" text-anchor="middle" fill="#f07c7c">-2340</text>
<rect x="892.4" y="544.4" width="41.0" height="1.6" fill="#f27474" stroke="#6a4a4a" stroke-width="0.6"/>
<text x="913.3" y="543.7" text-anchor="middle" fill="#f07c7c">-5236</text>
<rect x="933.4" y="544.4" width="41.0" height="2.7" fill="#f27474" stroke="#6a4a4a" stroke-width="0.6"/>
<text x="954.3" y="543.7" text-anchor="middle" fill="#f07c7c">-9114</text>
<rect x="974.4" y="544.4" width="41.0" height="4.0" fill="#f27474" stroke="#6a4a4a" stroke-width="0.6"/>
<text x="995.2" y="543.7" text-anchor="middle" fill="#f07c7c">-13223</text>
<rect x="1015.3" y="544.4" width="41.0" height="5.0" fill="#f27474" stroke="#6a4a4a" stroke-width="0.6"/>
<text x="1036.2" y="543.7" text-anchor="middle" fill="#f07c7c">-16814</text>
<rect x="1056.3" y="544.4" width="41.0" height="5.9" fill="#f27474" stroke="#6a4a4a" stroke-width="0.6"/>
<text x="1077.2" y="543.7" text-anchor="middle" fill="#f07c7c">-19562</text>
<path d="M564.6 544.4 H1080" stroke="#4a4a4a" stroke-width="0.9"/>
<rect x="564.6" y="569.7" width="41.0" height="2.7" fill="#4f70f0" stroke="#3d4a78" stroke-width="0.6"/>
<text x="585.5" y="579.6" text-anchor="middle" fill="#7878f0">16.16</text>
<rect x="605.6" y="569.2" width="41.0" height="3.2" fill="#4f70f0" stroke="#3d4a78" stroke-width="0.6"/>
<text x="626.5" y="579.6" text-anchor="middle" fill="#7878f0">18.56</text>
<rect x="646.6" y="569.3" width="41.0" height="3.1" fill="#4f70f0" stroke="#3d4a78" stroke-width="0.6"/>
<text x="667.4" y="579.6" text-anchor="middle" fill="#7878f0">18.16</text>
<rect x="687.5" y="569.9" width="41.0" height="2.5" fill="#4f70f0" stroke="#3d4a78" stroke-width="0.6"/>
<text x="708.4" y="579.6" text-anchor="middle" fill="#7878f0">14.69</text>
<rect x="728.5" y="570.9" width="41.0" height="1.5" fill="#4f70f0" stroke="#3d4a78" stroke-width="0.6"/>
<text x="790.4" y="579.6" text-anchor="middle" fill="#7878f0">1.10</text>
<rect x="810.5" y="572.4" width="41.0" height="1.6" fill="#f27474" stroke="#6a4a4a" stroke-width="0.6"/>
<text x="831.3" y="571.6" text-anchor="middle" fill="#f07c7c">-9.37</text>
<rect x="851.4" y="572.4" width="41.0" height="3.8" fill="#f27474" stroke="#6a4a4a" stroke-width="0.6"/>
<text x="872.3" y="571.6" text-anchor="middle" fill="#f07c7c">-22.49</text>
<rect x="892.4" y="572.4" width="41.0" height="5.9" fill="#f27474" stroke="#6a4a4a" stroke-width="0.6"/>
<text x="913.3" y="571.6" text-anchor="middle" fill="#f07c7c">-34.87</text>
<rect x="933.4" y="572.4" width="41.0" height="7.0" fill="#f27474" stroke="#6a4a4a" stroke-width="0.6"/>
<text x="954.3" y="571.6" text-anchor="middle" fill="#f07c7c">-41.35</text>
<rect x="974.4" y="572.4" width="41.0" height="6.7" fill="#f27474" stroke="#6a4a4a" stroke-width="0.6"/>
<text x="995.2" y="571.6" text-anchor="middle" fill="#f07c7c">-39.51</text>
<rect x="1015.3" y="572.4" width="41.0" height="5.4" fill="#f27474" stroke="#6a4a4a" stroke-width="0.6"/>
<text x="1036.2" y="571.6" text-anchor="middle" fill="#f07c7c">-31.67</text>
<rect x="1056.3" y="572.4" width="41.0" height="3.8" fill="#f27474" stroke="#6a4a4a" stroke-width="0.6"/>
<text x="1077.2" y="571.6" text-anchor="middle" fill="#f07c7c">-22.41</text>
<path d="M564.6 572.4 H1080" stroke="#4a4a4a" stroke-width="0.9"/>
<rect x="564.6" y="592.2" width="41.0" height="1.4" fill="#4f70f0" stroke="#3d4a78" stroke-width="0.6"/>
<text x="585.5" y="600.5" text-anchor="middle" fill="#7878f0">0.03</text>
<text x="626.5" y="600.5" text-anchor="middle" fill="#7878f0">0.01</text>
<rect x="646.6" y="593.6" width="41.0" height="0.9" fill="#f27474" stroke="#6a4a4a" stroke-width="0.6"/>
<text x="667.4" y="593" text-anchor="middle" fill="#f07c7c">-0.02</text>
<rect x="687.5" y="593.6" width="41.0" height="2.3" fill="#f27474" stroke="#6a4a4a" stroke-width="0.6"/>
<text x="708.4" y="593" text-anchor="middle" fill="#f07c7c">-0.05</text>
<rect x="728.5" y="593.6" width="41.0" height="3.2" fill="#f27474" stroke="#6a4a4a" stroke-width="0.6"/>
<rect x="769.5" y="593.6" width="41.0" height="4.1" fill="#f27474" stroke="#6a4a4a" stroke-width="0.6"/>
<text x="790.4" y="593" text-anchor="middle" fill="#f07c7c">-0.09</text>
<rect x="810.5" y="593.6" width="41.0" height="5.5" fill="#f27474" stroke="#6a4a4a" stroke-width="0.6"/>
<text x="831.3" y="593" text-anchor="middle" fill="#f07c7c">-0.12</text>
<rect x="851.4" y="593.6" width="41.0" height="6.4" fill="#f27474" stroke="#6a4a4a" stroke-width="0.6"/>
<text x="872.3" y="593" text-anchor="middle" fill="#f07c7c">-0.14</text>
<rect x="892.4" y="593.6" width="41.0" height="4.6" fill="#f27474" stroke="#6a4a4a" stroke-width="0.6"/>
<text x="913.3" y="593" text-anchor="middle" fill="#f07c7c">-0.10</text>
<rect x="933.4" y="593.6" width="41.0" height="0.9" fill="#f27474" stroke="#6a4a4a" stroke-width="0.6"/>
<text x="954.3" y="593" text-anchor="middle" fill="#f07c7c">-0.02</text>
<rect x="974.4" y="590.8" width="41.0" height="2.8" fill="#4f70f0" stroke="#3d4a78" stroke-width="0.6"/>
<text x="995.2" y="600.5" text-anchor="middle" fill="#7878f0">0.06</text>
<rect x="1015.3" y="589.5" width="41.0" height="4.1" fill="#4f70f0" stroke="#3d4a78" stroke-width="0.6"/>
<text x="1036.2" y="600.5" text-anchor="middle" fill="#7878f0">0.09</text>
<rect x="1056.3" y="589.9" width="41.0" height="3.7" fill="#4f70f0" stroke="#3d4a78" stroke-width="0.6"/>
<text x="1077.2" y="600.5" text-anchor="middle" fill="#7878f0">0.08</text>
<path d="M564.6 593.6 H1080" stroke="#4a4a4a" stroke-width="0.9"/>
<rect x="564.6" y="615.0" width="41.0" height="0.7" fill="#f27474" stroke="#6a4a4a" stroke-width="0.6"/>
<text x="585.5" y="614.4" text-anchor="middle" fill="#f07c7c">-33.70</text>
<text x="626.5" y="622" text-anchor="middle" fill="#7878f0">29.00</text>
<rect x="646.6" y="612.4" width="41.0" height="2.6" fill="#4f70f0" stroke="#3d4a78" stroke-width="0.6"/>
<text x="667.4" y="622" text-anchor="middle" fill="#7878f0">123.12</text>
<rect x="687.5" y="610.4" width="41.0" height="4.6" fill="#4f70f0" stroke="#3d4a78" stroke-width="0.6"/>
<text x="708.4" y="622" text-anchor="middle" fill="#7878f0">218.81</text>
<rect x="728.5" y="609.0" width="41.0" height="6.0" fill="#4f70f0" stroke="#3d4a78" stroke-width="0.6"/>
<rect x="769.5" y="608.3" width="41.0" height="6.7" fill="#4f70f0" stroke="#3d4a78" stroke-width="0.6"/>
<text x="790.4" y="622" text-anchor="middle" fill="#7878f0">320.21</text>
<rect x="810.5" y="608.0" width="41.0" height="7.0" fill="#4f70f0" stroke="#3d4a78" stroke-width="0.6"/>
<text x="831.3" y="622" text-anchor="middle" fill="#7878f0">332.46</text>
<rect x="851.4" y="608.5" width="41.0" height="6.5" fill="#4f70f0" stroke="#3d4a78" stroke-width="0.6"/>
<text x="872.3" y="622" text-anchor="middle" fill="#7878f0">307.91</text>
<rect x="892.4" y="610.5" width="41.0" height="4.5" fill="#4f70f0" stroke="#3d4a78" stroke-width="0.6"/>
<text x="913.3" y="622" text-anchor="middle" fill="#7878f0">215.62</text>
<rect x="933.4" y="613.6" width="41.0" height="1.4" fill="#4f70f0" stroke="#3d4a78" stroke-width="0.6"/>
<text x="954.3" y="622" text-anchor="middle" fill="#7878f0">66.07</text>
<rect x="974.4" y="615.0" width="41.0" height="1.6" fill="#f27474" stroke="#6a4a4a" stroke-width="0.6"/>
<text x="995.2" y="614.4" text-anchor="middle" fill="#f07c7c">-76.14</text>
<rect x="1015.3" y="615.0" width="41.0" height="3.2" fill="#f27474" stroke="#6a4a4a" stroke-width="0.6"/>
<text x="1036.2" y="614.4" text-anchor="middle" fill="#f07c7c">-152.18</text>
<rect x="1056.3" y="615.0" width="41.0" height="3.3" fill="#f27474" stroke="#6a4a4a" stroke-width="0.6"/>
<text x="1077.2" y="614.4" text-anchor="middle" fill="#f07c7c">-157.33</text>
<path d="M564.6 615 H1080" stroke="#4a4a4a" stroke-width="0.9"/>
<rect x="564.6" y="632.3" width="41.0" height="4.1" fill="#4f70f0" stroke="#3d4a78" stroke-width="0.6"/>
<text x="585.5" y="643.5" text-anchor="middle" fill="#7878f0">758.72</text>
<rect x="605.6" y="631.6" width="41.0" height="4.8" fill="#4f70f0" stroke="#3d4a78" stroke-width="0.6"/>
<text x="626.5" y="643.5" text-anchor="middle" fill="#7878f0">890.36</text>
<rect x="646.6" y="631.1" width="41.0" height="5.3" fill="#4f70f0" stroke="#3d4a78" stroke-width="0.6"/>
<text x="667.4" y="643.5" text-anchor="middle" fill="#7878f0">982.88</text>
<rect x="687.5" y="630.7" width="41.0" height="5.7" fill="#4f70f0" stroke="#3d4a78" stroke-width="0.6"/>
<text x="708.4" y="643.5" text-anchor="middle" fill="#7878f0">1056.38</text>
<rect x="728.5" y="630.3" width="41.0" height="6.1" fill="#4f70f0" stroke="#3d4a78" stroke-width="0.6"/>
<rect x="769.5" y="630.2" width="41.0" height="6.2" fill="#4f70f0" stroke="#3d4a78" stroke-width="0.6"/>
<text x="790.4" y="643.5" text-anchor="middle" fill="#7878f0">1148.15</text>
<rect x="810.5" y="630.4" width="41.0" height="6.0" fill="#4f70f0" stroke="#3d4a78" stroke-width="0.6"/>
<text x="831.3" y="643.5" text-anchor="middle" fill="#7878f0">1107.01</text>
<rect x="851.4" y="630.7" width="41.0" height="5.7" fill="#4f70f0" stroke="#3d4a78" stroke-width="0.6"/>
<text x="872.3" y="643.5" text-anchor="middle" fill="#7878f0">1049.97</text>
<rect x="892.4" y="630.6" width="41.0" height="5.8" fill="#4f70f0" stroke="#3d4a78" stroke-width="0.6"/>
<text x="913.3" y="643.5" text-anchor="middle" fill="#7878f0">1071.48</text>
<rect x="933.4" y="630.1" width="41.0" height="6.3" fill="#4f70f0" stroke="#3d4a78" stroke-width="0.6"/>
<text x="954.3" y="643.5" text-anchor="middle" fill="#7878f0">1175.36</text>
<rect x="974.4" y="629.7" width="41.0" height="6.7" fill="#4f70f0" stroke="#3d4a78" stroke-width="0.6"/>
<text x="995.2" y="643.5" text-anchor="middle" fill="#7878f0">1248.55</text>
<rect x="1015.3" y="630.0" width="41.0" height="6.4" fill="#4f70f0" stroke="#3d4a78" stroke-width="0.6"/>
<text x="1036.2" y="643.5" text-anchor="middle" fill="#7878f0">1188.17</text>
<rect x="1056.3" y="631.0" width="41.0" height="5.4" fill="#4f70f0" stroke="#3d4a78" stroke-width="0.6"/>
<text x="1077.2" y="643.5" text-anchor="middle" fill="#7878f0">999.12</text>
<path d="M564.6 636.4 H1080" stroke="#4a4a4a" stroke-width="0.9"/>
<text x="548.0" y="547.4" text-anchor="middle" fill="#555">PnL</text>
<text x="548.0" y="575.4" text-anchor="middle" fill="#555">Delta</text>
<text x="548.0" y="597" text-anchor="middle" fill="#555">Gamma</text>
<text x="548.0" y="618" text-anchor="middle" fill="#555">Theta</text>
<text x="548.0" y="639.4" text-anchor="middle" fill="#555">Vega</text>
<rect x="732.6" y="515.4" width="32.4" height="132.6" rx="3" fill="#e9eff9" fill-opacity="0.88" stroke="#8a93a8" stroke-width="0.9"/>
<text x="748.9" y="522.7" text-anchor="middle" fill="#333">6601.63</text>
<text x="748.9" y="544" text-anchor="middle" fill="#e83030" font-weight="bold" font-size="7.4">-875</text>
<text x="748.9" y="553.6" text-anchor="middle" fill="#e83030" font-weight="bold" font-size="7.4">-6.5%</text>
<text x="748.9" y="576" text-anchor="middle" fill="#3c3ce0" font-weight="bold" font-size="7.4">8.76</text>
<text x="748.9" y="597.4" text-anchor="middle" fill="#e83030" font-weight="bold" font-size="7.4">-0.07</text>
<text x="748.9" y="618.6" text-anchor="middle" fill="#3c3ce0" font-weight="bold" font-size="7.4">286.55</text>
<text x="748.9" y="639.8" text-anchor="middle" fill="#3c3ce0" font-weight="bold" font-size="7.4">1,122.67</text>
<path d="M599.3 134.2 h4.6 l-2.3 -2.8 z M599.3 138 h4.6 l-2.3 2.8 z" fill="#4d5566"/>
</svg>
<div class="r" style="left:0.00px;top:670.40px;width:1080.00px;height:5.00px;background:#293955;"></div>
</body></html>
